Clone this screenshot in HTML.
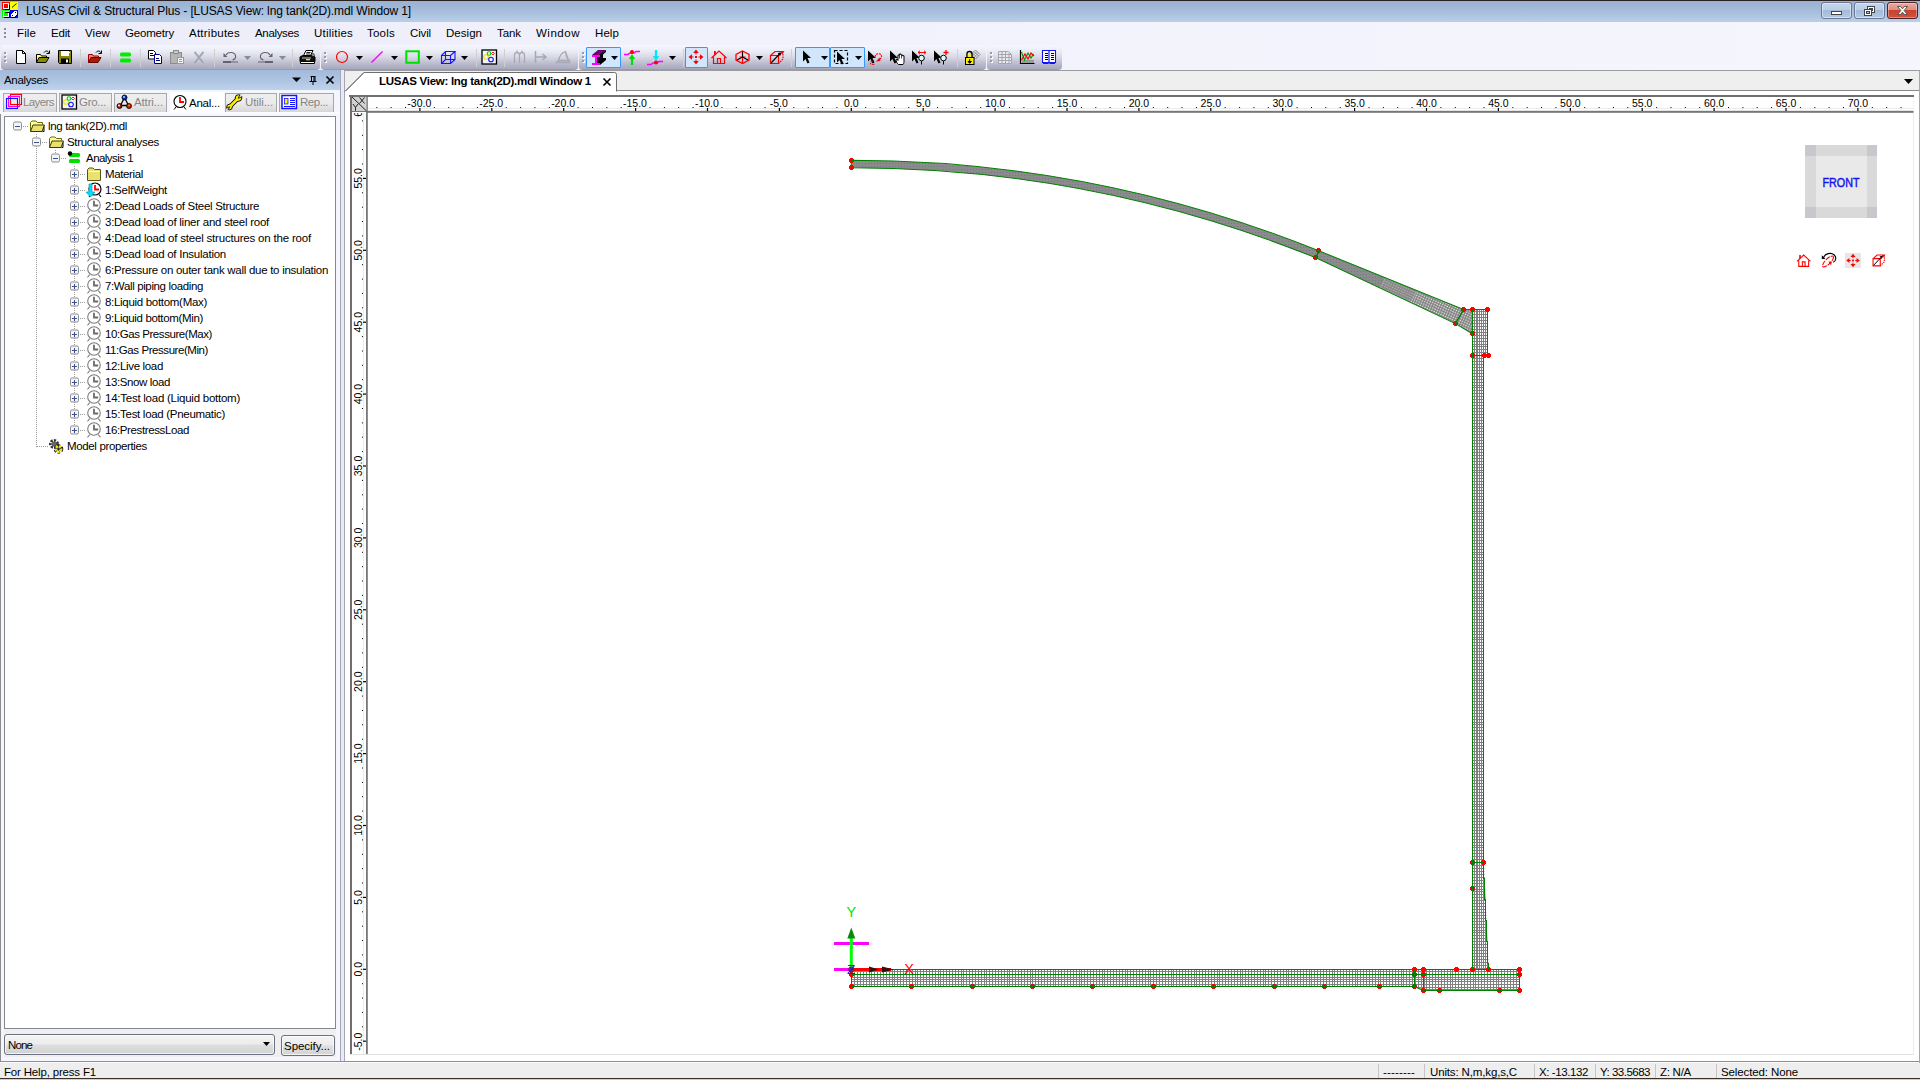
<!DOCTYPE html>
<html><head><meta charset="utf-8"><title>LUSAS Civil &amp; Structural Plus</title>
<style>
html,body{margin:0;padding:0;}
body{width:1920px;height:1080px;position:relative;overflow:hidden;background:#eeeefa;font-family:"Liberation Sans", sans-serif;font-size:11px;}
.t{position:absolute;white-space:pre;line-height:16px;height:16px;}
svg{position:absolute;overflow:visible;}
.ic{position:absolute;width:16px;height:16px;}
</style></head>
<body>
<div style="position:absolute;left:0px;top:0px;width:1920px;height:22px;background:linear-gradient(#98b0d2 0%,#a4bbda 45%,#b9cfe9 100%);"></div>
<div style="position:absolute;left:0px;top:0px;width:1920px;height:1px;background:#2a2020;"></div>
<svg style="left:2px;top:2px" width="16" height="16" viewBox="0 0 16 16" shape-rendering="crispEdges">
<rect x="0" y="0" width="8" height="8" fill="#f00"/><rect x="8" y="0" width="8" height="8" fill="#ff0"/>
<rect x="0" y="8" width="8" height="8" fill="#0f0"/><rect x="8" y="8" width="8" height="8" fill="#00f"/>
<rect x="1.5" y="1.5" width="5" height="5" fill="#f00" stroke="#fff" stroke-width="1"/><path d="M3 7.5h4.5v-4.5" stroke="#000" fill="none"/>
<rect x="1.5" y="9.5" width="5" height="5" fill="#0f0" stroke="#fff" stroke-width="1"/><path d="M2 15.5h5.5v-5.5M2.5 10.5h4" stroke="#000" fill="none"/>
<path d="M10 5.5L14.5 1.5" stroke="#224" stroke-width="1" shape-rendering="auto"/>
<path d="M9 12l4-3h2v3l-3 3h-3z" fill="#fff"/><path d="M10.5 13.5l1 1M13 10l1 1" stroke="#000"/><path d="M9 15.5h4l2.5-3" stroke="#000" fill="none"/>
</svg>
<span id="t1" class="t" style="left:26px;top:3px;font-size:12px;color:#000;font-weight:normal;letter-spacing:-0.135px;">LUSAS Civil &amp; Structural Plus - [LUSAS View: lng tank(2D).mdl Window 1]</span>
<div style="position:absolute;left:1821px;top:2px;width:31px;height:17px;border-radius:3px;border:1px solid #6c7796;box-sizing:border-box;background:linear-gradient(#c4d6ec 0%,#bacee6 45%,#a3bad8 50%,#b4c9e3 100%);box-shadow:inset 0 0 0 1px rgba(255,255,255,.45);"></div>
<div style="position:absolute;left:1854px;top:2px;width:31px;height:17px;border-radius:3px;border:1px solid #6c7796;box-sizing:border-box;background:linear-gradient(#c4d6ec 0%,#bacee6 45%,#a3bad8 50%,#b4c9e3 100%);box-shadow:inset 0 0 0 1px rgba(255,255,255,.45);"></div>
<div style="position:absolute;left:1887px;top:2px;width:31px;height:17px;border-radius:3px;border:1px solid #4a2428;box-sizing:border-box;background:linear-gradient(#e9a99f 0%,#df8d80 45%,#c9422f 50%,#d2523a 100%);box-shadow:inset 0 0 0 1px rgba(255,255,255,.35);"></div>
<svg style="left:1821px;top:2px" width="97" height="17" viewBox="0 0 97 17">
<rect x="10.5" y="9.5" width="10" height="3" fill="#fff" stroke="#444" stroke-width="1"/>
<rect x="46.500" y="4.5" width="7" height="6" fill="#fff" stroke="#444"/><rect x="48.5" y="6.5" width="3" height="2" fill="#b8cce6" stroke="#444"/>
<rect x="43.500" y="7.5" width="7" height="6" fill="#fff" stroke="#444"/><rect x="45.5" y="9.500" width="3" height="2" fill="#a9c0de" stroke="#444"/>
<path d="M76.500 4.500h3l2 2.300 2-2.300h3l-3.400 4 3.400 4h-3l-2-2.300-2 2.300h-3l3.400-4z" fill="#fff" stroke="#555" stroke-width="1"/>
</svg>
<div style="position:absolute;left:0px;top:22px;width:1920px;height:48px;background:linear-gradient(90deg,#ecedf9 0%,#f0f1fb 35%,#f5f6fd 100%);"></div>
<div style="position:absolute;left:4px;top:28px;width:2px;height:2px;background:#8c8c96;"></div>
<div style="position:absolute;left:4px;top:32px;width:2px;height:2px;background:#8c8c96;"></div>
<div style="position:absolute;left:4px;top:36px;width:2px;height:2px;background:#8c8c96;"></div>
<span id="t2" class="t" style="left:17px;top:25px;font-size:11.5px;color:#000;font-weight:normal;letter-spacing:0.117px;">File</span>
<span id="t3" class="t" style="left:51px;top:25px;font-size:11.5px;color:#000;font-weight:normal;letter-spacing:-0.207px;">Edit</span>
<span id="t4" class="t" style="left:85px;top:25px;font-size:11.5px;color:#000;font-weight:normal;letter-spacing:0.070px;">View</span>
<span id="t5" class="t" style="left:125px;top:25px;font-size:11.5px;color:#000;font-weight:normal;letter-spacing:-0.188px;">Geometry</span>
<span id="t6" class="t" style="left:189px;top:25px;font-size:11.5px;color:#000;font-weight:normal;letter-spacing:0.242px;">Attributes</span>
<span id="t7" class="t" style="left:255px;top:25px;font-size:11.5px;color:#000;font-weight:normal;letter-spacing:-0.334px;">Analyses</span>
<span id="t8" class="t" style="left:314px;top:25px;font-size:11.5px;color:#000;font-weight:normal;letter-spacing:0.215px;">Utilities</span>
<span id="t9" class="t" style="left:367px;top:25px;font-size:11.5px;color:#000;font-weight:normal;letter-spacing:0.228px;">Tools</span>
<span id="t10" class="t" style="left:410px;top:25px;font-size:11.5px;color:#000;font-weight:normal;letter-spacing:-0.147px;">Civil</span>
<span id="t11" class="t" style="left:446px;top:25px;font-size:11.5px;color:#000;font-weight:normal;letter-spacing:0.031px;">Design</span>
<span id="t12" class="t" style="left:497px;top:25px;font-size:11.5px;color:#000;font-weight:normal;letter-spacing:-0.074px;">Tank</span>
<span id="t13" class="t" style="left:536px;top:25px;font-size:11.5px;color:#000;font-weight:normal;letter-spacing:0.516px;">Window</span>
<span id="t14" class="t" style="left:595px;top:25px;font-size:11.5px;color:#000;font-weight:normal;letter-spacing:0.086px;">Help</span>
<div style="position:absolute;left:1px;top:45px;width:319px;height:24px;border-radius:3px 3px 4px 4px;background:linear-gradient(#f6f7fd 0%,#eceef7 22%,#dbdbe7 48%,#c5c5d6 68%,#b2b2c6 88%,#a9a9be 100%);border-bottom:1px solid #9a9aae;"></div>
<div style="position:absolute;left:4px;top:52px;width:2px;height:2px;background:#9a9aa6;"></div>
<div style="position:absolute;left:5px;top:53px;width:2px;height:2px;background:#fff;"></div>
<div style="position:absolute;left:4px;top:52px;width:2px;height:2px;background:#9a9aa6;"></div>
<div style="position:absolute;left:4px;top:56px;width:2px;height:2px;background:#9a9aa6;"></div>
<div style="position:absolute;left:5px;top:57px;width:2px;height:2px;background:#fff;"></div>
<div style="position:absolute;left:4px;top:56px;width:2px;height:2px;background:#9a9aa6;"></div>
<div style="position:absolute;left:4px;top:60px;width:2px;height:2px;background:#9a9aa6;"></div>
<div style="position:absolute;left:5px;top:61px;width:2px;height:2px;background:#fff;"></div>
<div style="position:absolute;left:4px;top:60px;width:2px;height:2px;background:#9a9aa6;"></div>
<div style="position:absolute;left:321px;top:45px;width:257px;height:24px;border-radius:3px 3px 4px 4px;background:linear-gradient(#f6f7fd 0%,#eceef7 22%,#dbdbe7 48%,#c5c5d6 68%,#b2b2c6 88%,#a9a9be 100%);border-bottom:1px solid #9a9aae;"></div>
<div style="position:absolute;left:324px;top:52px;width:2px;height:2px;background:#9a9aa6;"></div>
<div style="position:absolute;left:325px;top:53px;width:2px;height:2px;background:#fff;"></div>
<div style="position:absolute;left:324px;top:52px;width:2px;height:2px;background:#9a9aa6;"></div>
<div style="position:absolute;left:324px;top:56px;width:2px;height:2px;background:#9a9aa6;"></div>
<div style="position:absolute;left:325px;top:57px;width:2px;height:2px;background:#fff;"></div>
<div style="position:absolute;left:324px;top:56px;width:2px;height:2px;background:#9a9aa6;"></div>
<div style="position:absolute;left:324px;top:60px;width:2px;height:2px;background:#9a9aa6;"></div>
<div style="position:absolute;left:325px;top:61px;width:2px;height:2px;background:#fff;"></div>
<div style="position:absolute;left:324px;top:60px;width:2px;height:2px;background:#9a9aa6;"></div>
<div style="position:absolute;left:579px;top:45px;width:407px;height:24px;border-radius:3px 3px 4px 4px;background:linear-gradient(#f6f7fd 0%,#eceef7 22%,#dbdbe7 48%,#c5c5d6 68%,#b2b2c6 88%,#a9a9be 100%);border-bottom:1px solid #9a9aae;"></div>
<div style="position:absolute;left:582px;top:52px;width:2px;height:2px;background:#9a9aa6;"></div>
<div style="position:absolute;left:583px;top:53px;width:2px;height:2px;background:#fff;"></div>
<div style="position:absolute;left:582px;top:52px;width:2px;height:2px;background:#9a9aa6;"></div>
<div style="position:absolute;left:582px;top:56px;width:2px;height:2px;background:#9a9aa6;"></div>
<div style="position:absolute;left:583px;top:57px;width:2px;height:2px;background:#fff;"></div>
<div style="position:absolute;left:582px;top:56px;width:2px;height:2px;background:#9a9aa6;"></div>
<div style="position:absolute;left:582px;top:60px;width:2px;height:2px;background:#9a9aa6;"></div>
<div style="position:absolute;left:583px;top:61px;width:2px;height:2px;background:#fff;"></div>
<div style="position:absolute;left:582px;top:60px;width:2px;height:2px;background:#9a9aa6;"></div>
<div style="position:absolute;left:987px;top:45px;width:75px;height:24px;border-radius:3px 3px 4px 4px;background:linear-gradient(#f6f7fd 0%,#eceef7 22%,#dbdbe7 48%,#c5c5d6 68%,#b2b2c6 88%,#a9a9be 100%);border-bottom:1px solid #9a9aae;"></div>
<div style="position:absolute;left:990px;top:52px;width:2px;height:2px;background:#9a9aa6;"></div>
<div style="position:absolute;left:991px;top:53px;width:2px;height:2px;background:#fff;"></div>
<div style="position:absolute;left:990px;top:52px;width:2px;height:2px;background:#9a9aa6;"></div>
<div style="position:absolute;left:990px;top:56px;width:2px;height:2px;background:#9a9aa6;"></div>
<div style="position:absolute;left:991px;top:57px;width:2px;height:2px;background:#fff;"></div>
<div style="position:absolute;left:990px;top:56px;width:2px;height:2px;background:#9a9aa6;"></div>
<div style="position:absolute;left:990px;top:60px;width:2px;height:2px;background:#9a9aa6;"></div>
<div style="position:absolute;left:991px;top:61px;width:2px;height:2px;background:#fff;"></div>
<div style="position:absolute;left:990px;top:60px;width:2px;height:2px;background:#9a9aa6;"></div>
<div style="position:absolute;left:80px;top:49px;width:1px;height:18px;background:#cfcfd2;"></div>
<div style="position:absolute;left:110px;top:49px;width:1px;height:18px;background:#cfcfd2;"></div>
<div style="position:absolute;left:140px;top:49px;width:1px;height:18px;background:#cfcfd2;"></div>
<div style="position:absolute;left:214px;top:49px;width:1px;height:18px;background:#cfcfd2;"></div>
<div style="position:absolute;left:292px;top:49px;width:1px;height:18px;background:#cfcfd2;"></div>
<div style="position:absolute;left:476px;top:49px;width:1px;height:18px;background:#cfcfd2;"></div>
<div style="position:absolute;left:504px;top:49px;width:1px;height:18px;background:#cfcfd2;"></div>
<div style="position:absolute;left:683px;top:49px;width:1px;height:18px;background:#cfcfd2;"></div>
<div style="position:absolute;left:791px;top:49px;width:1px;height:18px;background:#cfcfd2;"></div>
<div style="position:absolute;left:957px;top:49px;width:1px;height:18px;background:#cfcfd2;"></div>
<div style="position:absolute;left:586px;top:47px;width:35px;height:21px;box-sizing:border-box;border:1px solid #3399ff;background:#d1e6fb;border-radius:1px;"></div>
<div style="position:absolute;left:685px;top:47px;width:23px;height:21px;box-sizing:border-box;border:1px solid #3399ff;background:#d1e6fb;border-radius:1px;"></div>
<div style="position:absolute;left:795px;top:47px;width:35px;height:21px;box-sizing:border-box;border:1px solid #3399ff;background:#d1e6fb;border-radius:1px;"></div>
<div style="position:absolute;left:830px;top:47px;width:35px;height:21px;box-sizing:border-box;border:1px solid #3399ff;background:#d1e6fb;border-radius:1px;"></div>
<svg style="left:243.5px;top:56px" width="7" height="4" viewBox="0 0 7 4"><path d="M0 0h7l-3.500 4z" fill="#8a8a94"/></svg>
<svg style="left:278.5px;top:56px" width="7" height="4" viewBox="0 0 7 4"><path d="M0 0h7l-3.500 4z" fill="#8a8a94"/></svg>
<svg style="left:355.5px;top:56px" width="7" height="4" viewBox="0 0 7 4"><path d="M0 0h7l-3.500 4z" fill="#000"/></svg>
<svg style="left:390.5px;top:56px" width="7" height="4" viewBox="0 0 7 4"><path d="M0 0h7l-3.500 4z" fill="#000"/></svg>
<svg style="left:425.5px;top:56px" width="7" height="4" viewBox="0 0 7 4"><path d="M0 0h7l-3.500 4z" fill="#000"/></svg>
<svg style="left:460.5px;top:56px" width="7" height="4" viewBox="0 0 7 4"><path d="M0 0h7l-3.500 4z" fill="#000"/></svg>
<svg style="left:610.5px;top:56px" width="7" height="4" viewBox="0 0 7 4"><path d="M0 0h7l-3.500 4z" fill="#000"/></svg>
<svg style="left:668.5px;top:56px" width="7" height="4" viewBox="0 0 7 4"><path d="M0 0h7l-3.500 4z" fill="#000"/></svg>
<svg style="left:755.5px;top:56px" width="7" height="4" viewBox="0 0 7 4"><path d="M0 0h7l-3.500 4z" fill="#000"/></svg>
<svg style="left:820.5px;top:56px" width="7" height="4" viewBox="0 0 7 4"><path d="M0 0h7l-3.500 4z" fill="#000"/></svg>
<svg style="left:854.5px;top:56px" width="7" height="4" viewBox="0 0 7 4"><path d="M0 0h7l-3.500 4z" fill="#000"/></svg>
<div style="position:absolute;left:0px;top:70px;width:1920px;height:1010px;background:#eceef8;"></div>
<div style="position:absolute;left:0px;top:69.5px;width:1920px;height:1px;background:#a4a6b4;"></div>
<div style="position:absolute;left:0px;top:70px;width:340px;height:19.5px;background:linear-gradient(#a2badb 0%,#adc4e1 50%,#bdd3ec 100%);"></div>
<div style="position:absolute;left:0px;top:89.5px;width:340px;height:971.5px;background:#f5f6fd;"></div>
<div style="position:absolute;left:4px;top:116px;width:332px;height:941px;background:#efefef;"></div>
<div style="position:absolute;left:0px;top:113.5px;width:0.8px;height:947.5px;background:#8c8c8c;"></div>
<div style="position:absolute;left:339.5px;top:70px;width:5.5px;height:991px;background:#e6eafa;border-left:1px solid #a4a6b2;border-right:1px solid #a4a6b2;box-sizing:border-box;"></div>
<span id="t15" class="t" style="left:4px;top:72px;font-size:11.5px;color:#000;font-weight:normal;letter-spacing:-0.334px;">Analyses</span>
<svg style="left:290px;top:74px" width="48" height="12" viewBox="0 0 48 12">
<path d="M2 3.500h9l-4.500 4.500z" fill="#000"/>
<path d="M20.500 2.500h5M21.500 2.500v4.500M24 2.500v4.500M25 2.500v4.500M19.500 7.500h7M23 7.500v3.500" stroke="#000" stroke-width="1" fill="none"/>
<path d="M36.500 2.500l7 7M43.500 2.500l-7 7" stroke="#000" stroke-width="1.700" fill="none"/>
</svg>
<div style="position:absolute;left:2.5px;top:92.5px;width:54.5px;height:19.5px;box-sizing:border-box;border:1px solid #a8a8a8;border-bottom:none;background:linear-gradient(#eeeeee 0%,#ebebeb 50%,#d6d6d6 100%);"></div>
<span id="t16" class="t" style="left:23px;top:94px;font-size:11.5px;color:#858585;font-weight:normal;letter-spacing:-0.589px;">Layers</span>
<div style="position:absolute;left:58.5px;top:92.5px;width:53.5px;height:19.5px;box-sizing:border-box;border:1px solid #a8a8a8;border-bottom:none;background:linear-gradient(#eeeeee 0%,#ebebeb 50%,#d6d6d6 100%);"></div>
<span id="t17" class="t" style="left:79px;top:94px;font-size:11.5px;color:#858585;font-weight:normal;letter-spacing:-0.294px;">Gro...</span>
<div style="position:absolute;left:113.5px;top:92.5px;width:53.5px;height:19.5px;box-sizing:border-box;border:1px solid #a8a8a8;border-bottom:none;background:linear-gradient(#eeeeee 0%,#ebebeb 50%,#d6d6d6 100%);"></div>
<span id="t18" class="t" style="left:134px;top:94px;font-size:11.5px;color:#858585;font-weight:normal;letter-spacing:-0.129px;">Attri...</span>
<div style="position:absolute;left:170px;top:92px;width:53.5px;height:21px;background:#fff;"></div>
<span id="t19" class="t" style="left:189px;top:95px;font-size:11.5px;color:#000;font-weight:normal;letter-spacing:-0.230px;">Anal...</span>
<div style="position:absolute;left:224.5px;top:92.5px;width:52.5px;height:19.5px;box-sizing:border-box;border:1px solid #a8a8a8;border-bottom:none;background:linear-gradient(#eeeeee 0%,#ebebeb 50%,#d6d6d6 100%);"></div>
<span id="t20" class="t" style="left:245px;top:94px;font-size:11.5px;color:#858585;font-weight:normal;letter-spacing:-0.094px;">Utili...</span>
<div style="position:absolute;left:278.5px;top:92.5px;width:55px;height:19.5px;box-sizing:border-box;border:1px solid #a8a8a8;border-bottom:none;background:linear-gradient(#eeeeee 0%,#ebebeb 50%,#d6d6d6 100%);"></div>
<span id="t21" class="t" style="left:300px;top:94px;font-size:11.5px;color:#858585;font-weight:normal;letter-spacing:-0.448px;">Rep...</span>
<div style="position:absolute;left:0px;top:112px;width:340px;height:1.5px;background:#fbfbff;"></div>
<div style="position:absolute;left:4px;top:115.5px;width:332px;height:913.5px;box-sizing:border-box;border:1px solid #828790;background:#fff;"></div>
<div style="position:absolute;left:4px;top:1034px;width:271px;height:21px;box-sizing:border-box;border:1px solid #6a7080;border-radius:3px;background:linear-gradient(#f4f4f4 0%,#ececec 48%,#dedede 52%,#d2d2d2 100%);box-shadow:inset 0 0 0 1px rgba(255,255,255,.7);"></div>
<span id="t22" class="t" style="left:8px;top:1036.5px;font-size:11.5px;color:#000;font-weight:normal;letter-spacing:-0.875px;">None</span>
<svg style="left:263px;top:1042px" width="7" height="4" viewBox="0 0 7 4"><path d="M0 0h7l-3.500 4z" fill="#000"/></svg>
<div style="position:absolute;left:281px;top:1035px;width:54px;height:21px;box-sizing:border-box;border:1px solid #6a7080;border-radius:3px;background:linear-gradient(#f4f4f4 0%,#ececec 48%,#dedede 52%,#d4d4d4 100%);box-shadow:inset 0 0 0 1px rgba(255,255,255,.7);"></div>
<span id="t23" class="t" style="left:284px;top:1037.5px;font-size:11.5px;color:#000;font-weight:normal;letter-spacing:-0.045px;">Specify...</span>
<div style="position:absolute;left:0px;top:1063px;width:1920px;height:15px;background:#eeeeee;"></div>
<div style="position:absolute;left:0px;top:1060.5px;width:1920px;height:1.2px;background:#8f8f8f;"></div>
<div style="position:absolute;left:0px;top:1061.7px;width:1920px;height:1.3px;background:#fbfbfb;"></div>
<div style="position:absolute;left:0px;top:1078px;width:1920px;height:1px;background:#3a3026;"></div>
<div style="position:absolute;left:0px;top:1079px;width:1920px;height:1px;background:#b9d4f0;"></div>
<span id="t24" class="t" style="left:4px;top:1064px;font-size:11.5px;color:#000;font-weight:normal;letter-spacing:-0.180px;">For Help, press F1</span>
<div style="position:absolute;left:1378px;top:1064px;width:1px;height:14px;background:#c6c6c6;"></div>
<div style="position:absolute;left:1424px;top:1064px;width:1px;height:14px;background:#c6c6c6;"></div>
<div style="position:absolute;left:1534px;top:1064px;width:1px;height:14px;background:#c6c6c6;"></div>
<div style="position:absolute;left:1595px;top:1064px;width:1px;height:14px;background:#c6c6c6;"></div>
<div style="position:absolute;left:1655px;top:1064px;width:1px;height:14px;background:#c6c6c6;"></div>
<div style="position:absolute;left:1716px;top:1064px;width:1px;height:14px;background:#c6c6c6;"></div>
<span id="t25" class="t" style="left:1383px;top:1064px;font-size:11.5px;color:#000;font-weight:normal;letter-spacing:0.170px;">--------</span>
<span id="t26" class="t" style="left:1430px;top:1064px;font-size:11.5px;color:#000;font-weight:normal;letter-spacing:-0.145px;">Units: N,m,kg,s,C</span>
<span id="t27" class="t" style="left:1539px;top:1064px;font-size:11.5px;color:#000;font-weight:normal;letter-spacing:-0.408px;">X: -13.132</span>
<span id="t28" class="t" style="left:1600px;top:1064px;font-size:11.5px;color:#000;font-weight:normal;letter-spacing:-0.500px;">Y: 33.5683</span>
<span id="t29" class="t" style="left:1660px;top:1064px;font-size:11.5px;color:#000;font-weight:normal;letter-spacing:-0.266px;">Z: N/A</span>
<span id="t30" class="t" style="left:1721px;top:1064px;font-size:11.5px;color:#000;font-weight:normal;letter-spacing:-0.117px;">Selected: None</span>
<div style="position:absolute;left:345px;top:70px;width:1575px;height:990.5px;background:#fff;"></div>
<div style="position:absolute;left:345px;top:70.5px;width:1575px;height:20px;background:#efefef;"></div>
<div style="position:absolute;left:345px;top:70px;width:1575px;height:1.2px;background:#9b9ba2;"></div>
<div style="position:absolute;left:345px;top:90px;width:1575px;height:1px;background:#8a8a8a;"></div>
<svg style="left:345px;top:70px" width="280" height="24" viewBox="0 0 280 24">
<path d="M0 21.500L19 2.500H269.500Q271.500 2.500 271.500 4.500V21.500" fill="#fff" stroke="#6e6e6e" stroke-width="1"/>
<rect x="0" y="20.600" width="271" height="3" fill="#fff"/>
<path d="M0 21.500L19 2.500" stroke="#6e6e6e" fill="none"/>
<path d="M258.500 8.500l7 7M265.500 8.500l-7 7" stroke="#000" stroke-width="1.600"/>
</svg>
<span id="t31" class="t" style="left:379px;top:73px;font-size:11.5px;color:#000;font-weight:bold;letter-spacing:-0.272px;">LUSAS View: lng tank(2D).mdl Window 1</span>
<svg style="left:1904px;top:79px" width="9" height="5" viewBox="0 0 9 5"><path d="M0 0h9l-4.500 5z" fill="#000"/></svg>
<div style="position:absolute;left:349px;top:94.5px;width:1564.5px;height:2px;background:#6f6f6f;"></div>
<div style="position:absolute;left:349.5px;top:94.5px;width:2px;height:959.5px;background:#6f6f6f;"></div>
<div style="position:absolute;left:1919px;top:71px;width:1px;height:992px;background:#a8a8a8;"></div>
<div style="position:absolute;left:349px;top:1054px;width:1565px;height:1px;background:#e2e2e2;"></div>
<div style="position:absolute;left:1913px;top:97px;width:1px;height:958px;background:#ececec;"></div>
<svg style="left:0;top:0" width="345" height="1030" viewBox="0 0 345 1030">
<path d="M36.5 134L36.5 446.5" stroke="#9a9a9a" stroke-width="1" stroke-dasharray="1 1" fill="none" shape-rendering="crispEdges"/>
<path d="M55.5 150L55.5 158" stroke="#9a9a9a" stroke-width="1" stroke-dasharray="1 1" fill="none" shape-rendering="crispEdges"/>
<path d="M74.5 166L74.5 430" stroke="#9a9a9a" stroke-width="1" stroke-dasharray="1 1" fill="none" shape-rendering="crispEdges"/>
<path d="M23 126.5L29 126.5" stroke="#9a9a9a" stroke-width="1" stroke-dasharray="1 1" fill="none" shape-rendering="crispEdges"/>
<rect x="13.5" y="122" width="8" height="8" rx="1.500" fill="#f4f4f4" stroke="#8f8f8f"/>
<path d="M15 126.5h5" stroke="#3c4f8e" stroke-width="1" shape-rendering="crispEdges"/>
<g transform="translate(29 118)"><path d="M1.500 13.500V4.500l1.500-1.500h4l1.500 1.500h5v2" fill="#ffff9a" stroke="#6b6b00" stroke-width="1"/><path d="M1.500 13.500l2.500-6.500h11.500l-2.500 6.500z" fill="#e8e070" stroke="#3a3a00" stroke-width="1"/><path d="M13.500 13.500h1.500v-5" stroke="#000" fill="none"/></g>
<path d="M42 142.5L48 142.5" stroke="#9a9a9a" stroke-width="1" stroke-dasharray="1 1" fill="none" shape-rendering="crispEdges"/>
<rect x="32.5" y="138" width="8" height="8" rx="1.500" fill="#f4f4f4" stroke="#8f8f8f"/>
<path d="M34 142.5h5" stroke="#3c4f8e" stroke-width="1" shape-rendering="crispEdges"/>
<g transform="translate(48 134)"><path d="M1.500 13.500V4.500l1.500-1.500h4l1.500 1.500h5v2" fill="#ffff9a" stroke="#6b6b00" stroke-width="1"/><path d="M1.500 13.500l2.500-6.500h11.500l-2.500 6.500z" fill="#e8e070" stroke="#3a3a00" stroke-width="1"/><path d="M13.500 13.500h1.500v-5" stroke="#000" fill="none"/></g>
<path d="M61 158.5L67 158.5" stroke="#9a9a9a" stroke-width="1" stroke-dasharray="1 1" fill="none" shape-rendering="crispEdges"/>
<rect x="51.5" y="154" width="8" height="8" rx="1.500" fill="#f4f4f4" stroke="#8f8f8f"/>
<path d="M53 158.5h5" stroke="#3c4f8e" stroke-width="1" shape-rendering="crispEdges"/>
<g transform="translate(67 150)"><rect x="2" y="3" width="11" height="4" rx="1.500" fill="#00e000"/><rect x="2" y="9" width="11" height="4" rx="1.500" fill="#00e000"/><circle cx="3" cy="3.500" r="2.200" fill="#000"/></g>
<path d="M80 174.5L86 174.5" stroke="#9a9a9a" stroke-width="1" stroke-dasharray="1 1" fill="none" shape-rendering="crispEdges"/>
<rect x="70.5" y="170" width="8" height="8" rx="1.500" fill="#f4f4f4" stroke="#8f8f8f"/>
<path d="M72 174.5h5" stroke="#3c4f8e" stroke-width="1" shape-rendering="crispEdges"/>
<path d="M74.5 172v5" stroke="#3c4f8e" stroke-width="1" shape-rendering="crispEdges"/>
<g transform="translate(86 166)"><path d="M1.500 14.500V3.500l1.500-1.500h4l1.500 1.500h6v11z" fill="#e9e26e" stroke="#55551a" stroke-width="1"/><path d="M2.500 5.500h11" stroke="#fffff0"/></g>
<path d="M80 190.5L86 190.5" stroke="#9a9a9a" stroke-width="1" stroke-dasharray="1 1" fill="none" shape-rendering="crispEdges"/>
<rect x="70.5" y="186" width="8" height="8" rx="1.500" fill="#f4f4f4" stroke="#8f8f8f"/>
<path d="M72 190.5h5" stroke="#3c4f8e" stroke-width="1" shape-rendering="crispEdges"/>
<path d="M74.5 188v5" stroke="#3c4f8e" stroke-width="1" shape-rendering="crispEdges"/>
<g transform="translate(86 182)"><circle cx="9" cy="7" r="6" fill="#fff" stroke="#000" stroke-width="1.200"/><path d="M9 3v4.500h4" stroke="#f00" stroke-width="1.800" fill="none"/><path d="M5 12.500l-2 2.500M13 12.500l2 2.500" stroke="#000" stroke-width="1.200"/><path d="M3 2v8h-3l4.500 5 4.500-5h-3v-8z" fill="#00e0ff" stroke="#008aa0" stroke-width=".6"/></g>
<path d="M80 206.5L86 206.5" stroke="#9a9a9a" stroke-width="1" stroke-dasharray="1 1" fill="none" shape-rendering="crispEdges"/>
<rect x="70.5" y="202" width="8" height="8" rx="1.500" fill="#f4f4f4" stroke="#8f8f8f"/>
<path d="M72 206.5h5" stroke="#3c4f8e" stroke-width="1" shape-rendering="crispEdges"/>
<path d="M74.5 204v5" stroke="#3c4f8e" stroke-width="1" shape-rendering="crispEdges"/>
<g transform="translate(86 198)"><circle cx="8" cy="7" r="6.300" fill="#fff" stroke="#7c7c7c" stroke-width="1.100"/><path d="M8 2.800v4.700h4.200" stroke="#6c6c6c" stroke-width="1.800" fill="none"/><path d="M3.800 12.500l-2.300 2.800M12.200 12.500l2.300 2.800" stroke="#7c7c7c" stroke-width="1.100"/></g>
<path d="M80 222.5L86 222.5" stroke="#9a9a9a" stroke-width="1" stroke-dasharray="1 1" fill="none" shape-rendering="crispEdges"/>
<rect x="70.5" y="218" width="8" height="8" rx="1.500" fill="#f4f4f4" stroke="#8f8f8f"/>
<path d="M72 222.5h5" stroke="#3c4f8e" stroke-width="1" shape-rendering="crispEdges"/>
<path d="M74.5 220v5" stroke="#3c4f8e" stroke-width="1" shape-rendering="crispEdges"/>
<g transform="translate(86 214)"><circle cx="8" cy="7" r="6.300" fill="#fff" stroke="#7c7c7c" stroke-width="1.100"/><path d="M8 2.800v4.700h4.200" stroke="#6c6c6c" stroke-width="1.800" fill="none"/><path d="M3.800 12.500l-2.300 2.800M12.200 12.500l2.300 2.800" stroke="#7c7c7c" stroke-width="1.100"/></g>
<path d="M80 238.5L86 238.5" stroke="#9a9a9a" stroke-width="1" stroke-dasharray="1 1" fill="none" shape-rendering="crispEdges"/>
<rect x="70.5" y="234" width="8" height="8" rx="1.500" fill="#f4f4f4" stroke="#8f8f8f"/>
<path d="M72 238.5h5" stroke="#3c4f8e" stroke-width="1" shape-rendering="crispEdges"/>
<path d="M74.5 236v5" stroke="#3c4f8e" stroke-width="1" shape-rendering="crispEdges"/>
<g transform="translate(86 230)"><circle cx="8" cy="7" r="6.300" fill="#fff" stroke="#7c7c7c" stroke-width="1.100"/><path d="M8 2.800v4.700h4.200" stroke="#6c6c6c" stroke-width="1.800" fill="none"/><path d="M3.800 12.500l-2.300 2.800M12.200 12.500l2.300 2.800" stroke="#7c7c7c" stroke-width="1.100"/></g>
<path d="M80 254.5L86 254.5" stroke="#9a9a9a" stroke-width="1" stroke-dasharray="1 1" fill="none" shape-rendering="crispEdges"/>
<rect x="70.5" y="250" width="8" height="8" rx="1.500" fill="#f4f4f4" stroke="#8f8f8f"/>
<path d="M72 254.5h5" stroke="#3c4f8e" stroke-width="1" shape-rendering="crispEdges"/>
<path d="M74.5 252v5" stroke="#3c4f8e" stroke-width="1" shape-rendering="crispEdges"/>
<g transform="translate(86 246)"><circle cx="8" cy="7" r="6.300" fill="#fff" stroke="#7c7c7c" stroke-width="1.100"/><path d="M8 2.800v4.700h4.200" stroke="#6c6c6c" stroke-width="1.800" fill="none"/><path d="M3.800 12.500l-2.300 2.800M12.200 12.500l2.300 2.800" stroke="#7c7c7c" stroke-width="1.100"/></g>
<path d="M80 270.5L86 270.5" stroke="#9a9a9a" stroke-width="1" stroke-dasharray="1 1" fill="none" shape-rendering="crispEdges"/>
<rect x="70.5" y="266" width="8" height="8" rx="1.500" fill="#f4f4f4" stroke="#8f8f8f"/>
<path d="M72 270.5h5" stroke="#3c4f8e" stroke-width="1" shape-rendering="crispEdges"/>
<path d="M74.5 268v5" stroke="#3c4f8e" stroke-width="1" shape-rendering="crispEdges"/>
<g transform="translate(86 262)"><circle cx="8" cy="7" r="6.300" fill="#fff" stroke="#7c7c7c" stroke-width="1.100"/><path d="M8 2.800v4.700h4.200" stroke="#6c6c6c" stroke-width="1.800" fill="none"/><path d="M3.800 12.500l-2.300 2.800M12.200 12.500l2.300 2.800" stroke="#7c7c7c" stroke-width="1.100"/></g>
<path d="M80 286.5L86 286.5" stroke="#9a9a9a" stroke-width="1" stroke-dasharray="1 1" fill="none" shape-rendering="crispEdges"/>
<rect x="70.5" y="282" width="8" height="8" rx="1.500" fill="#f4f4f4" stroke="#8f8f8f"/>
<path d="M72 286.5h5" stroke="#3c4f8e" stroke-width="1" shape-rendering="crispEdges"/>
<path d="M74.5 284v5" stroke="#3c4f8e" stroke-width="1" shape-rendering="crispEdges"/>
<g transform="translate(86 278)"><circle cx="8" cy="7" r="6.300" fill="#fff" stroke="#7c7c7c" stroke-width="1.100"/><path d="M8 2.800v4.700h4.200" stroke="#6c6c6c" stroke-width="1.800" fill="none"/><path d="M3.800 12.500l-2.300 2.800M12.200 12.500l2.300 2.800" stroke="#7c7c7c" stroke-width="1.100"/></g>
<path d="M80 302.5L86 302.5" stroke="#9a9a9a" stroke-width="1" stroke-dasharray="1 1" fill="none" shape-rendering="crispEdges"/>
<rect x="70.5" y="298" width="8" height="8" rx="1.500" fill="#f4f4f4" stroke="#8f8f8f"/>
<path d="M72 302.5h5" stroke="#3c4f8e" stroke-width="1" shape-rendering="crispEdges"/>
<path d="M74.5 300v5" stroke="#3c4f8e" stroke-width="1" shape-rendering="crispEdges"/>
<g transform="translate(86 294)"><circle cx="8" cy="7" r="6.300" fill="#fff" stroke="#7c7c7c" stroke-width="1.100"/><path d="M8 2.800v4.700h4.200" stroke="#6c6c6c" stroke-width="1.800" fill="none"/><path d="M3.800 12.500l-2.300 2.800M12.200 12.500l2.300 2.800" stroke="#7c7c7c" stroke-width="1.100"/></g>
<path d="M80 318.5L86 318.5" stroke="#9a9a9a" stroke-width="1" stroke-dasharray="1 1" fill="none" shape-rendering="crispEdges"/>
<rect x="70.5" y="314" width="8" height="8" rx="1.500" fill="#f4f4f4" stroke="#8f8f8f"/>
<path d="M72 318.5h5" stroke="#3c4f8e" stroke-width="1" shape-rendering="crispEdges"/>
<path d="M74.5 316v5" stroke="#3c4f8e" stroke-width="1" shape-rendering="crispEdges"/>
<g transform="translate(86 310)"><circle cx="8" cy="7" r="6.300" fill="#fff" stroke="#7c7c7c" stroke-width="1.100"/><path d="M8 2.800v4.700h4.200" stroke="#6c6c6c" stroke-width="1.800" fill="none"/><path d="M3.800 12.500l-2.300 2.800M12.200 12.500l2.300 2.800" stroke="#7c7c7c" stroke-width="1.100"/></g>
<path d="M80 334.5L86 334.5" stroke="#9a9a9a" stroke-width="1" stroke-dasharray="1 1" fill="none" shape-rendering="crispEdges"/>
<rect x="70.5" y="330" width="8" height="8" rx="1.500" fill="#f4f4f4" stroke="#8f8f8f"/>
<path d="M72 334.5h5" stroke="#3c4f8e" stroke-width="1" shape-rendering="crispEdges"/>
<path d="M74.5 332v5" stroke="#3c4f8e" stroke-width="1" shape-rendering="crispEdges"/>
<g transform="translate(86 326)"><circle cx="8" cy="7" r="6.300" fill="#fff" stroke="#7c7c7c" stroke-width="1.100"/><path d="M8 2.800v4.700h4.200" stroke="#6c6c6c" stroke-width="1.800" fill="none"/><path d="M3.800 12.500l-2.300 2.800M12.200 12.500l2.300 2.800" stroke="#7c7c7c" stroke-width="1.100"/></g>
<path d="M80 350.5L86 350.5" stroke="#9a9a9a" stroke-width="1" stroke-dasharray="1 1" fill="none" shape-rendering="crispEdges"/>
<rect x="70.5" y="346" width="8" height="8" rx="1.500" fill="#f4f4f4" stroke="#8f8f8f"/>
<path d="M72 350.5h5" stroke="#3c4f8e" stroke-width="1" shape-rendering="crispEdges"/>
<path d="M74.5 348v5" stroke="#3c4f8e" stroke-width="1" shape-rendering="crispEdges"/>
<g transform="translate(86 342)"><circle cx="8" cy="7" r="6.300" fill="#fff" stroke="#7c7c7c" stroke-width="1.100"/><path d="M8 2.800v4.700h4.200" stroke="#6c6c6c" stroke-width="1.800" fill="none"/><path d="M3.800 12.500l-2.300 2.800M12.200 12.500l2.300 2.800" stroke="#7c7c7c" stroke-width="1.100"/></g>
<path d="M80 366.5L86 366.5" stroke="#9a9a9a" stroke-width="1" stroke-dasharray="1 1" fill="none" shape-rendering="crispEdges"/>
<rect x="70.5" y="362" width="8" height="8" rx="1.500" fill="#f4f4f4" stroke="#8f8f8f"/>
<path d="M72 366.5h5" stroke="#3c4f8e" stroke-width="1" shape-rendering="crispEdges"/>
<path d="M74.5 364v5" stroke="#3c4f8e" stroke-width="1" shape-rendering="crispEdges"/>
<g transform="translate(86 358)"><circle cx="8" cy="7" r="6.300" fill="#fff" stroke="#7c7c7c" stroke-width="1.100"/><path d="M8 2.800v4.700h4.200" stroke="#6c6c6c" stroke-width="1.800" fill="none"/><path d="M3.800 12.500l-2.300 2.800M12.200 12.500l2.300 2.800" stroke="#7c7c7c" stroke-width="1.100"/></g>
<path d="M80 382.5L86 382.5" stroke="#9a9a9a" stroke-width="1" stroke-dasharray="1 1" fill="none" shape-rendering="crispEdges"/>
<rect x="70.5" y="378" width="8" height="8" rx="1.500" fill="#f4f4f4" stroke="#8f8f8f"/>
<path d="M72 382.5h5" stroke="#3c4f8e" stroke-width="1" shape-rendering="crispEdges"/>
<path d="M74.5 380v5" stroke="#3c4f8e" stroke-width="1" shape-rendering="crispEdges"/>
<g transform="translate(86 374)"><circle cx="8" cy="7" r="6.300" fill="#fff" stroke="#7c7c7c" stroke-width="1.100"/><path d="M8 2.800v4.700h4.200" stroke="#6c6c6c" stroke-width="1.800" fill="none"/><path d="M3.800 12.500l-2.300 2.800M12.200 12.500l2.300 2.800" stroke="#7c7c7c" stroke-width="1.100"/></g>
<path d="M80 398.5L86 398.5" stroke="#9a9a9a" stroke-width="1" stroke-dasharray="1 1" fill="none" shape-rendering="crispEdges"/>
<rect x="70.5" y="394" width="8" height="8" rx="1.500" fill="#f4f4f4" stroke="#8f8f8f"/>
<path d="M72 398.5h5" stroke="#3c4f8e" stroke-width="1" shape-rendering="crispEdges"/>
<path d="M74.5 396v5" stroke="#3c4f8e" stroke-width="1" shape-rendering="crispEdges"/>
<g transform="translate(86 390)"><circle cx="8" cy="7" r="6.300" fill="#fff" stroke="#7c7c7c" stroke-width="1.100"/><path d="M8 2.800v4.700h4.200" stroke="#6c6c6c" stroke-width="1.800" fill="none"/><path d="M3.800 12.500l-2.300 2.800M12.200 12.500l2.300 2.800" stroke="#7c7c7c" stroke-width="1.100"/></g>
<path d="M80 414.5L86 414.5" stroke="#9a9a9a" stroke-width="1" stroke-dasharray="1 1" fill="none" shape-rendering="crispEdges"/>
<rect x="70.5" y="410" width="8" height="8" rx="1.500" fill="#f4f4f4" stroke="#8f8f8f"/>
<path d="M72 414.5h5" stroke="#3c4f8e" stroke-width="1" shape-rendering="crispEdges"/>
<path d="M74.5 412v5" stroke="#3c4f8e" stroke-width="1" shape-rendering="crispEdges"/>
<g transform="translate(86 406)"><circle cx="8" cy="7" r="6.300" fill="#fff" stroke="#7c7c7c" stroke-width="1.100"/><path d="M8 2.800v4.700h4.200" stroke="#6c6c6c" stroke-width="1.800" fill="none"/><path d="M3.800 12.500l-2.300 2.800M12.200 12.500l2.300 2.800" stroke="#7c7c7c" stroke-width="1.100"/></g>
<path d="M80 430.5L86 430.5" stroke="#9a9a9a" stroke-width="1" stroke-dasharray="1 1" fill="none" shape-rendering="crispEdges"/>
<rect x="70.5" y="426" width="8" height="8" rx="1.500" fill="#f4f4f4" stroke="#8f8f8f"/>
<path d="M72 430.5h5" stroke="#3c4f8e" stroke-width="1" shape-rendering="crispEdges"/>
<path d="M74.5 428v5" stroke="#3c4f8e" stroke-width="1" shape-rendering="crispEdges"/>
<g transform="translate(86 422)"><circle cx="8" cy="7" r="6.300" fill="#fff" stroke="#7c7c7c" stroke-width="1.100"/><path d="M8 2.800v4.700h4.200" stroke="#6c6c6c" stroke-width="1.800" fill="none"/><path d="M3.800 12.500l-2.300 2.800M12.200 12.500l2.300 2.800" stroke="#7c7c7c" stroke-width="1.100"/></g>
<path d="M37 446.5L48 446.5" stroke="#9a9a9a" stroke-width="1" stroke-dasharray="1 1" fill="none" shape-rendering="crispEdges"/>
<g transform="translate(48 438)"><circle cx="6" cy="6" r="3.500" fill="none" stroke="#333" stroke-width="3" stroke-dasharray="2 1.200"/><circle cx="6" cy="6" r="2.500" fill="#666"/><circle cx="10.500" cy="11" r="3" fill="none" stroke="#222" stroke-width="3.600" stroke-dasharray="2 1.300"/><circle cx="10.500" cy="11" r="2.800" fill="none" stroke="#ffe600" stroke-width="2.200" stroke-dasharray="2 1.300"/><circle cx="10.500" cy="11" r="1.200" fill="#222"/></g>
</svg>
<span id="t32" class="t" style="left:48px;top:118px;font-size:11.5px;color:#000;font-weight:normal;letter-spacing:-0.336px;">lng tank(2D).mdl</span>
<span id="t33" class="t" style="left:67px;top:134px;font-size:11.5px;color:#000;font-weight:normal;letter-spacing:-0.305px;">Structural analyses</span>
<span id="t34" class="t" style="left:86px;top:150px;font-size:11.5px;color:#000;font-weight:normal;letter-spacing:-0.542px;">Analysis 1</span>
<span id="t35" class="t" style="left:105px;top:166px;font-size:11.5px;color:#000;font-weight:normal;letter-spacing:-0.363px;">Material</span>
<span id="t36" class="t" style="left:105px;top:182px;font-size:11.5px;color:#000;font-weight:normal;letter-spacing:-0.250px;">1:SelfWeight</span>
<span id="t37" class="t" style="left:105px;top:198px;font-size:11.5px;color:#000;font-weight:normal;letter-spacing:-0.311px;">2:Dead Loads of Steel Structure</span>
<span id="t38" class="t" style="left:105px;top:214px;font-size:11.5px;color:#000;font-weight:normal;letter-spacing:-0.246px;">3:Dead load of liner and steel roof</span>
<span id="t39" class="t" style="left:105px;top:230px;font-size:11.5px;color:#000;font-weight:normal;letter-spacing:-0.190px;">4:Dead load of steel structures on the roof</span>
<span id="t40" class="t" style="left:105px;top:246px;font-size:11.5px;color:#000;font-weight:normal;letter-spacing:-0.249px;">5:Dead load of Insulation</span>
<span id="t41" class="t" style="left:105px;top:262px;font-size:11.5px;color:#000;font-weight:normal;letter-spacing:-0.274px;">6:Pressure on outer tank wall due to insulation</span>
<span id="t42" class="t" style="left:105px;top:278px;font-size:11.5px;color:#000;font-weight:normal;letter-spacing:-0.367px;">7:Wall piping loading</span>
<span id="t43" class="t" style="left:105px;top:294px;font-size:11.5px;color:#000;font-weight:normal;letter-spacing:-0.302px;">8:Liquid bottom(Max)</span>
<span id="t44" class="t" style="left:105px;top:310px;font-size:11.5px;color:#000;font-weight:normal;letter-spacing:-0.341px;">9:Liquid bottom(Min)</span>
<span id="t45" class="t" style="left:105px;top:326px;font-size:11.5px;color:#000;font-weight:normal;letter-spacing:-0.434px;">10:Gas Pressure(Max)</span>
<span id="t46" class="t" style="left:105px;top:342px;font-size:11.5px;color:#000;font-weight:normal;letter-spacing:-0.432px;">11:Gas Pressure(Min)</span>
<span id="t47" class="t" style="left:105px;top:358px;font-size:11.5px;color:#000;font-weight:normal;letter-spacing:-0.336px;">12:Live load</span>
<span id="t48" class="t" style="left:105px;top:374px;font-size:11.5px;color:#000;font-weight:normal;letter-spacing:-0.392px;">13:Snow load</span>
<span id="t49" class="t" style="left:105px;top:390px;font-size:11.5px;color:#000;font-weight:normal;letter-spacing:-0.247px;">14:Test load (Liquid bottom)</span>
<span id="t50" class="t" style="left:105px;top:406px;font-size:11.5px;color:#000;font-weight:normal;letter-spacing:-0.300px;">15:Test load (Pneumatic)</span>
<span id="t51" class="t" style="left:105px;top:422px;font-size:11.5px;color:#000;font-weight:normal;letter-spacing:-0.384px;">16:PrestressLoad</span>
<span id="t52" class="t" style="left:67px;top:438px;font-size:11.5px;color:#000;font-weight:normal;letter-spacing:-0.354px;">Model properties</span>
<svg style="left:0;top:0" width="1920" height="1080" viewBox="0 0 1920 1080" font-family='"Liberation Sans", sans-serif'>
<defs>
<pattern id="mslab" width="2.400" height="2.440" patternUnits="userSpaceOnUse" x="851.500" y="969.800"><rect width="2.400" height="2.440" fill="#7d7d7d"/><rect x="1" y="1" width="1.400" height="1.440" fill="#fff"/></pattern>
<pattern id="mwall" width="1.900" height="3" patternUnits="userSpaceOnUse" x="1472.600" y="310"><rect width="1.900" height="3" fill="#808080"/><rect x=".850" y=".900" width="1.050" height="2.100" fill="#fff"/></pattern>
<pattern id="mroof" width="3" height="3" patternUnits="userSpaceOnUse"><rect width="3" height="3" fill="#8b8b8b"/><rect x="1" y="1" width="1" height="1" fill="#767690"/></pattern>
<pattern id="mtaper" width="2.500" height="2.500" patternUnits="userSpaceOnUse" patternTransform="rotate(24)"><rect width="2.500" height="2.500" fill="#808080"/><rect x="1.200" y=".600" width="1.150" height="1.250" fill="#fff"/></pattern>
<pattern id="mtaper1" width="2.500" height="2.500" patternUnits="userSpaceOnUse" patternTransform="rotate(24)"><rect width="2.500" height="2.500" fill="#878787"/><rect x="1.300" y=".700" width=".800" height=".800" fill="#f4f4f4"/></pattern>
<clipPath id="vclip"><rect x="352" y="113" width="14" height="941"/></clipPath>
<clipPath id="hclip"><rect x="368" y="97" width="1545" height="14"/></clipPath>
</defs>
<rect x="352" y="97" width="1561.500" height="14" fill="#fff"/>
<rect x="368" y="108" width="1545.500" height="1" fill="#ebebeb"/>
<rect x="352" y="110.800" width="1561.500" height="2" fill="#777"/>
<rect x="352" y="112" width="14" height="942" fill="#fff"/>
<rect x="363" y="113" width="1" height="941" fill="#ebebeb"/>
<rect x="366" y="97" width="1.800" height="957" fill="#777"/>
<rect x="352" y="97" width="14.500" height="14" fill="#d2d2d2"/>
<path d="M352 97L366.500 111" stroke="#222" stroke-width="1"/>
<path d="M359.500 97.500l5 6M364.500 97.500l-5 6" stroke="#111" stroke-width=".9" fill="none"/>
<path d="M353 104l2.500 3.500 2.500-3.500M355.500 107.500v3.300" stroke="#111" stroke-width=".9" fill="none"/>
<g clip-path="url(#hclip)">
<rect x="361.9" y="107" width="1" height="1" fill="#000"/>
<rect x="376.3" y="107" width="1" height="1" fill="#000"/>
<rect x="390.6" y="107" width="1" height="1" fill="#000"/>
<rect x="405.0" y="107" width="1" height="1" fill="#000"/>
<rect x="419.3" y="108" width="1.200" height="3" fill="#000"/>
<text x="419.3" y="107" font-size="10.500" text-anchor="middle" fill="#000">-30.0</text>
<rect x="433.8" y="107" width="1" height="1" fill="#000"/>
<rect x="448.2" y="107" width="1" height="1" fill="#000"/>
<rect x="462.5" y="107" width="1" height="1" fill="#000"/>
<rect x="476.9" y="107" width="1" height="1" fill="#000"/>
<rect x="491.2" y="108" width="1.200" height="3" fill="#000"/>
<text x="491.2" y="107" font-size="10.500" text-anchor="middle" fill="#000">-25.0</text>
<rect x="505.7" y="107" width="1" height="1" fill="#000"/>
<rect x="520.1" y="107" width="1" height="1" fill="#000"/>
<rect x="534.4" y="107" width="1" height="1" fill="#000"/>
<rect x="548.8" y="107" width="1" height="1" fill="#000"/>
<rect x="563.1" y="108" width="1.200" height="3" fill="#000"/>
<text x="563.1" y="107" font-size="10.500" text-anchor="middle" fill="#000">-20.0</text>
<rect x="577.6" y="107" width="1" height="1" fill="#000"/>
<rect x="592.0" y="107" width="1" height="1" fill="#000"/>
<rect x="606.3" y="107" width="1" height="1" fill="#000"/>
<rect x="620.7" y="107" width="1" height="1" fill="#000"/>
<rect x="635.0" y="108" width="1.200" height="3" fill="#000"/>
<text x="635.0" y="107" font-size="10.500" text-anchor="middle" fill="#000">-15.0</text>
<rect x="649.5" y="107" width="1" height="1" fill="#000"/>
<rect x="663.9" y="107" width="1" height="1" fill="#000"/>
<rect x="678.2" y="107" width="1" height="1" fill="#000"/>
<rect x="692.6" y="107" width="1" height="1" fill="#000"/>
<rect x="706.9" y="108" width="1.200" height="3" fill="#000"/>
<text x="706.9" y="107" font-size="10.500" text-anchor="middle" fill="#000">-10.0</text>
<rect x="721.4" y="107" width="1" height="1" fill="#000"/>
<rect x="735.8" y="107" width="1" height="1" fill="#000"/>
<rect x="750.1" y="107" width="1" height="1" fill="#000"/>
<rect x="764.5" y="107" width="1" height="1" fill="#000"/>
<rect x="778.8" y="108" width="1.200" height="3" fill="#000"/>
<text x="778.8" y="107" font-size="10.500" text-anchor="middle" fill="#000">-5.0</text>
<rect x="793.3" y="107" width="1" height="1" fill="#000"/>
<rect x="807.7" y="107" width="1" height="1" fill="#000"/>
<rect x="822.0" y="107" width="1" height="1" fill="#000"/>
<rect x="836.4" y="107" width="1" height="1" fill="#000"/>
<rect x="850.7" y="108" width="1.200" height="3" fill="#000"/>
<text x="851.3" y="107" font-size="10.500" text-anchor="middle" fill="#000">0.0</text>
<rect x="865.2" y="107" width="1" height="1" fill="#000"/>
<rect x="879.6" y="107" width="1" height="1" fill="#000"/>
<rect x="893.9" y="107" width="1" height="1" fill="#000"/>
<rect x="908.3" y="107" width="1" height="1" fill="#000"/>
<rect x="922.6" y="108" width="1.200" height="3" fill="#000"/>
<text x="923.2" y="107" font-size="10.500" text-anchor="middle" fill="#000">5.0</text>
<rect x="937.1" y="107" width="1" height="1" fill="#000"/>
<rect x="951.5" y="107" width="1" height="1" fill="#000"/>
<rect x="965.8" y="107" width="1" height="1" fill="#000"/>
<rect x="980.2" y="107" width="1" height="1" fill="#000"/>
<rect x="994.5" y="108" width="1.200" height="3" fill="#000"/>
<text x="995.1" y="107" font-size="10.500" text-anchor="middle" fill="#000">10.0</text>
<rect x="1009.0" y="107" width="1" height="1" fill="#000"/>
<rect x="1023.4" y="107" width="1" height="1" fill="#000"/>
<rect x="1037.7" y="107" width="1" height="1" fill="#000"/>
<rect x="1052.1" y="107" width="1" height="1" fill="#000"/>
<rect x="1066.4" y="108" width="1.200" height="3" fill="#000"/>
<text x="1067.0" y="107" font-size="10.500" text-anchor="middle" fill="#000">15.0</text>
<rect x="1080.9" y="107" width="1" height="1" fill="#000"/>
<rect x="1095.3" y="107" width="1" height="1" fill="#000"/>
<rect x="1109.6" y="107" width="1" height="1" fill="#000"/>
<rect x="1124.0" y="107" width="1" height="1" fill="#000"/>
<rect x="1138.3" y="108" width="1.200" height="3" fill="#000"/>
<text x="1138.9" y="107" font-size="10.500" text-anchor="middle" fill="#000">20.0</text>
<rect x="1152.8" y="107" width="1" height="1" fill="#000"/>
<rect x="1167.2" y="107" width="1" height="1" fill="#000"/>
<rect x="1181.5" y="107" width="1" height="1" fill="#000"/>
<rect x="1195.9" y="107" width="1" height="1" fill="#000"/>
<rect x="1210.2" y="108" width="1.200" height="3" fill="#000"/>
<text x="1210.8" y="107" font-size="10.500" text-anchor="middle" fill="#000">25.0</text>
<rect x="1224.7" y="107" width="1" height="1" fill="#000"/>
<rect x="1239.1" y="107" width="1" height="1" fill="#000"/>
<rect x="1253.4" y="107" width="1" height="1" fill="#000"/>
<rect x="1267.8" y="107" width="1" height="1" fill="#000"/>
<rect x="1282.1" y="108" width="1.200" height="3" fill="#000"/>
<text x="1282.7" y="107" font-size="10.500" text-anchor="middle" fill="#000">30.0</text>
<rect x="1296.6" y="107" width="1" height="1" fill="#000"/>
<rect x="1311.0" y="107" width="1" height="1" fill="#000"/>
<rect x="1325.3" y="107" width="1" height="1" fill="#000"/>
<rect x="1339.7" y="107" width="1" height="1" fill="#000"/>
<rect x="1354.0" y="108" width="1.200" height="3" fill="#000"/>
<text x="1354.6" y="107" font-size="10.500" text-anchor="middle" fill="#000">35.0</text>
<rect x="1368.5" y="107" width="1" height="1" fill="#000"/>
<rect x="1382.9" y="107" width="1" height="1" fill="#000"/>
<rect x="1397.2" y="107" width="1" height="1" fill="#000"/>
<rect x="1411.6" y="107" width="1" height="1" fill="#000"/>
<rect x="1425.9" y="108" width="1.200" height="3" fill="#000"/>
<text x="1426.5" y="107" font-size="10.500" text-anchor="middle" fill="#000">40.0</text>
<rect x="1440.4" y="107" width="1" height="1" fill="#000"/>
<rect x="1454.8" y="107" width="1" height="1" fill="#000"/>
<rect x="1469.1" y="107" width="1" height="1" fill="#000"/>
<rect x="1483.5" y="107" width="1" height="1" fill="#000"/>
<rect x="1497.8" y="108" width="1.200" height="3" fill="#000"/>
<text x="1498.4" y="107" font-size="10.500" text-anchor="middle" fill="#000">45.0</text>
<rect x="1512.3" y="107" width="1" height="1" fill="#000"/>
<rect x="1526.7" y="107" width="1" height="1" fill="#000"/>
<rect x="1541.0" y="107" width="1" height="1" fill="#000"/>
<rect x="1555.4" y="107" width="1" height="1" fill="#000"/>
<rect x="1569.7" y="108" width="1.200" height="3" fill="#000"/>
<text x="1570.3" y="107" font-size="10.500" text-anchor="middle" fill="#000">50.0</text>
<rect x="1584.2" y="107" width="1" height="1" fill="#000"/>
<rect x="1598.6" y="107" width="1" height="1" fill="#000"/>
<rect x="1612.9" y="107" width="1" height="1" fill="#000"/>
<rect x="1627.3" y="107" width="1" height="1" fill="#000"/>
<rect x="1641.6" y="108" width="1.200" height="3" fill="#000"/>
<text x="1642.2" y="107" font-size="10.500" text-anchor="middle" fill="#000">55.0</text>
<rect x="1656.1" y="107" width="1" height="1" fill="#000"/>
<rect x="1670.5" y="107" width="1" height="1" fill="#000"/>
<rect x="1684.8" y="107" width="1" height="1" fill="#000"/>
<rect x="1699.2" y="107" width="1" height="1" fill="#000"/>
<rect x="1713.5" y="108" width="1.200" height="3" fill="#000"/>
<text x="1714.1" y="107" font-size="10.500" text-anchor="middle" fill="#000">60.0</text>
<rect x="1728.0" y="107" width="1" height="1" fill="#000"/>
<rect x="1742.4" y="107" width="1" height="1" fill="#000"/>
<rect x="1756.7" y="107" width="1" height="1" fill="#000"/>
<rect x="1771.1" y="107" width="1" height="1" fill="#000"/>
<rect x="1785.4" y="108" width="1.200" height="3" fill="#000"/>
<text x="1786.0" y="107" font-size="10.500" text-anchor="middle" fill="#000">65.0</text>
<rect x="1799.9" y="107" width="1" height="1" fill="#000"/>
<rect x="1814.3" y="107" width="1" height="1" fill="#000"/>
<rect x="1828.6" y="107" width="1" height="1" fill="#000"/>
<rect x="1843.0" y="107" width="1" height="1" fill="#000"/>
<rect x="1857.3" y="108" width="1.200" height="3" fill="#000"/>
<text x="1857.9" y="107" font-size="10.500" text-anchor="middle" fill="#000">70.0</text>
<rect x="1871.8" y="107" width="1" height="1" fill="#000"/>
<rect x="1886.2" y="107" width="1" height="1" fill="#000"/>
<rect x="1900.5" y="107" width="1" height="1" fill="#000"/>
<rect x="1914.9" y="107" width="1" height="1" fill="#000"/>
</g>
<g clip-path="url(#vclip)">
<rect x="362" y="1055.1" width="1" height="1" fill="#000"/>
<rect x="363" y="1040.6" width="3" height="1.200" fill="#000"/>
<text transform="translate(362 1041.8) rotate(-90)" font-size="10.500" text-anchor="middle" fill="#000">-5.0</text>
<rect x="362" y="1026.3" width="1" height="1" fill="#000"/>
<rect x="362" y="1011.9" width="1" height="1" fill="#000"/>
<rect x="362" y="997.6" width="1" height="1" fill="#000"/>
<rect x="362" y="983.2" width="1" height="1" fill="#000"/>
<rect x="363" y="968.7" width="3" height="1.200" fill="#000"/>
<text transform="translate(362 969.3) rotate(-90)" font-size="10.500" text-anchor="middle" fill="#000">0.0</text>
<rect x="362" y="954.4" width="1" height="1" fill="#000"/>
<rect x="362" y="940.0" width="1" height="1" fill="#000"/>
<rect x="362" y="925.7" width="1" height="1" fill="#000"/>
<rect x="362" y="911.3" width="1" height="1" fill="#000"/>
<rect x="363" y="896.8" width="3" height="1.200" fill="#000"/>
<text transform="translate(362 897.4) rotate(-90)" font-size="10.500" text-anchor="middle" fill="#000">5.0</text>
<rect x="362" y="882.5" width="1" height="1" fill="#000"/>
<rect x="362" y="868.1" width="1" height="1" fill="#000"/>
<rect x="362" y="853.8" width="1" height="1" fill="#000"/>
<rect x="362" y="839.4" width="1" height="1" fill="#000"/>
<rect x="363" y="824.9" width="3" height="1.200" fill="#000"/>
<text transform="translate(362 825.5) rotate(-90)" font-size="10.500" text-anchor="middle" fill="#000">10.0</text>
<rect x="362" y="810.6" width="1" height="1" fill="#000"/>
<rect x="362" y="796.2" width="1" height="1" fill="#000"/>
<rect x="362" y="781.9" width="1" height="1" fill="#000"/>
<rect x="362" y="767.5" width="1" height="1" fill="#000"/>
<rect x="363" y="753.0" width="3" height="1.200" fill="#000"/>
<text transform="translate(362 753.6) rotate(-90)" font-size="10.500" text-anchor="middle" fill="#000">15.0</text>
<rect x="362" y="738.7" width="1" height="1" fill="#000"/>
<rect x="362" y="724.3" width="1" height="1" fill="#000"/>
<rect x="362" y="710.0" width="1" height="1" fill="#000"/>
<rect x="362" y="695.6" width="1" height="1" fill="#000"/>
<rect x="363" y="681.1" width="3" height="1.200" fill="#000"/>
<text transform="translate(362 681.7) rotate(-90)" font-size="10.500" text-anchor="middle" fill="#000">20.0</text>
<rect x="362" y="666.8" width="1" height="1" fill="#000"/>
<rect x="362" y="652.4" width="1" height="1" fill="#000"/>
<rect x="362" y="638.1" width="1" height="1" fill="#000"/>
<rect x="362" y="623.7" width="1" height="1" fill="#000"/>
<rect x="363" y="609.2" width="3" height="1.200" fill="#000"/>
<text transform="translate(362 609.8) rotate(-90)" font-size="10.500" text-anchor="middle" fill="#000">25.0</text>
<rect x="362" y="594.9" width="1" height="1" fill="#000"/>
<rect x="362" y="580.5" width="1" height="1" fill="#000"/>
<rect x="362" y="566.2" width="1" height="1" fill="#000"/>
<rect x="362" y="551.8" width="1" height="1" fill="#000"/>
<rect x="363" y="537.3" width="3" height="1.200" fill="#000"/>
<text transform="translate(362 537.9) rotate(-90)" font-size="10.500" text-anchor="middle" fill="#000">30.0</text>
<rect x="362" y="523.0" width="1" height="1" fill="#000"/>
<rect x="362" y="508.6" width="1" height="1" fill="#000"/>
<rect x="362" y="494.3" width="1" height="1" fill="#000"/>
<rect x="362" y="479.9" width="1" height="1" fill="#000"/>
<rect x="363" y="465.4" width="3" height="1.200" fill="#000"/>
<text transform="translate(362 466.0) rotate(-90)" font-size="10.500" text-anchor="middle" fill="#000">35.0</text>
<rect x="362" y="451.1" width="1" height="1" fill="#000"/>
<rect x="362" y="436.7" width="1" height="1" fill="#000"/>
<rect x="362" y="422.4" width="1" height="1" fill="#000"/>
<rect x="362" y="408.0" width="1" height="1" fill="#000"/>
<rect x="363" y="393.5" width="3" height="1.200" fill="#000"/>
<text transform="translate(362 394.1) rotate(-90)" font-size="10.500" text-anchor="middle" fill="#000">40.0</text>
<rect x="362" y="379.2" width="1" height="1" fill="#000"/>
<rect x="362" y="364.8" width="1" height="1" fill="#000"/>
<rect x="362" y="350.5" width="1" height="1" fill="#000"/>
<rect x="362" y="336.1" width="1" height="1" fill="#000"/>
<rect x="363" y="321.6" width="3" height="1.200" fill="#000"/>
<text transform="translate(362 322.2) rotate(-90)" font-size="10.500" text-anchor="middle" fill="#000">45.0</text>
<rect x="362" y="307.3" width="1" height="1" fill="#000"/>
<rect x="362" y="292.9" width="1" height="1" fill="#000"/>
<rect x="362" y="278.6" width="1" height="1" fill="#000"/>
<rect x="362" y="264.2" width="1" height="1" fill="#000"/>
<rect x="363" y="249.7" width="3" height="1.200" fill="#000"/>
<text transform="translate(362 250.3) rotate(-90)" font-size="10.500" text-anchor="middle" fill="#000">50.0</text>
<rect x="362" y="235.4" width="1" height="1" fill="#000"/>
<rect x="362" y="221.0" width="1" height="1" fill="#000"/>
<rect x="362" y="206.7" width="1" height="1" fill="#000"/>
<rect x="362" y="192.3" width="1" height="1" fill="#000"/>
<rect x="363" y="177.8" width="3" height="1.200" fill="#000"/>
<text transform="translate(362 178.4) rotate(-90)" font-size="10.500" text-anchor="middle" fill="#000">55.0</text>
<rect x="362" y="163.5" width="1" height="1" fill="#000"/>
<rect x="362" y="149.1" width="1" height="1" fill="#000"/>
<rect x="362" y="134.8" width="1" height="1" fill="#000"/>
<rect x="362" y="120.4" width="1" height="1" fill="#000"/>
<rect x="363" y="105.9" width="3" height="1.200" fill="#000"/>
<text transform="translate(362 106.5) rotate(-90)" font-size="10.500" text-anchor="middle" fill="#000">60.0</text>
</g>
<path d="M851.3 160.2A1253 1253 0 0 1 1318.8 250.8L1315.9 257.8A1245.5 1245.5 0 0 0 851.3 167.7Z" fill="url(#mroof)" stroke="none"/>
<path d="M1318.8 250.8L1385.41 277.756L1380.12 288.068L1315.9 257.8Z" fill="url(#mroof)" stroke="none"/>
<path d="M1385.41 277.756L1417.26 290.648L1410.83 302.544L1380.12 288.068Z" fill="url(#mtaper1)" stroke="none"/>
<path d="M1417.26 290.648L1463.6 309.4L1455.5 323.6L1410.83 302.544Z" fill="url(#mtaper)" stroke="none"/>
<path d="M1463.6 309.4L1472.4 309.4L1472.4 333.75L1455.5 323.6Z" fill="url(#mtaper)" stroke="none"/>
<clipPath id="cwall"><path d="M1472 309H1488V355H1484V863L1488.500 963V970H1472Z"/></clipPath>
<clipPath id="cslab"><path d="M851 969H1520V991H1423.500L1414.500 986.700H851Z"/></clipPath>
<path clip-path="url(#cwall)" d="M1474.5 309V970M1476.5 309V970M1477.5 309V970M1479.5 309V970M1481.5 309V970M1483.5 309V970M1485.5 309V970M1487.5 309V970M1472 311.5H1489M1472 314.5H1489M1472 317.5H1489M1472 320.5H1489M1472 323.5H1489M1472 326.5H1489M1472 329.5H1489M1472 332.5H1489M1472 335.5H1489M1472 338.5H1489M1472 341.5H1489M1472 344.5H1489M1472 346.5H1489M1472 349.5H1489M1472 352.5H1489M1472 355.5H1489M1472 358.5H1489M1472 361.5H1489M1472 364.5H1489M1472 367.5H1489M1472 370.5H1489M1472 373.5H1489M1472 376.5H1489M1472 379.5H1489M1472 382.5H1489M1472 385.5H1489M1472 387.5H1489M1472 390.5H1489M1472 393.5H1489M1472 396.5H1489M1472 399.5H1489M1472 402.5H1489M1472 405.5H1489M1472 408.5H1489M1472 411.5H1489M1472 414.5H1489M1472 417.5H1489M1472 420.5H1489M1472 423.5H1489M1472 426.5H1489M1472 428.5H1489M1472 431.5H1489M1472 434.5H1489M1472 437.5H1489M1472 440.5H1489M1472 443.5H1489M1472 446.5H1489M1472 449.5H1489M1472 452.5H1489M1472 455.5H1489M1472 458.5H1489M1472 461.5H1489M1472 464.5H1489M1472 467.5H1489M1472 470.5H1489M1472 472.5H1489M1472 475.5H1489M1472 478.5H1489M1472 481.5H1489M1472 484.5H1489M1472 487.5H1489M1472 490.5H1489M1472 493.5H1489M1472 496.5H1489M1472 499.5H1489M1472 502.5H1489M1472 505.5H1489M1472 508.5H1489M1472 511.5H1489M1472 513.5H1489M1472 516.5H1489M1472 519.5H1489M1472 522.5H1489M1472 525.5H1489M1472 528.5H1489M1472 531.5H1489M1472 534.5H1489M1472 537.5H1489M1472 540.5H1489M1472 543.5H1489M1472 546.5H1489M1472 549.5H1489M1472 552.5H1489M1472 554.5H1489M1472 557.5H1489M1472 560.5H1489M1472 563.5H1489M1472 566.5H1489M1472 569.5H1489M1472 572.5H1489M1472 575.5H1489M1472 578.5H1489M1472 581.5H1489M1472 584.5H1489M1472 587.5H1489M1472 590.5H1489M1472 593.5H1489M1472 596.5H1489M1472 598.5H1489M1472 601.5H1489M1472 604.5H1489M1472 607.5H1489M1472 610.5H1489M1472 613.5H1489M1472 616.5H1489M1472 619.5H1489M1472 622.5H1489M1472 625.5H1489M1472 628.5H1489M1472 631.5H1489M1472 634.5H1489M1472 637.5H1489M1472 639.5H1489M1472 642.5H1489M1472 645.5H1489M1472 648.5H1489M1472 651.5H1489M1472 654.5H1489M1472 657.5H1489M1472 660.5H1489M1472 663.5H1489M1472 666.5H1489M1472 669.5H1489M1472 672.5H1489M1472 675.5H1489M1472 678.5H1489M1472 680.5H1489M1472 683.5H1489M1472 686.5H1489M1472 689.5H1489M1472 692.5H1489M1472 695.5H1489M1472 698.5H1489M1472 701.5H1489M1472 704.5H1489M1472 707.5H1489M1472 710.5H1489M1472 713.5H1489M1472 716.5H1489M1472 719.5H1489M1472 722.5H1489M1472 724.5H1489M1472 727.5H1489M1472 730.5H1489M1472 733.5H1489M1472 736.5H1489M1472 739.5H1489M1472 742.5H1489M1472 745.5H1489M1472 748.5H1489M1472 751.5H1489M1472 754.5H1489M1472 757.5H1489M1472 760.5H1489M1472 763.5H1489M1472 765.5H1489M1472 768.5H1489M1472 771.5H1489M1472 774.5H1489M1472 777.5H1489M1472 780.5H1489M1472 783.5H1489M1472 786.5H1489M1472 789.5H1489M1472 792.5H1489M1472 795.5H1489M1472 798.5H1489M1472 801.5H1489M1472 804.5H1489M1472 806.5H1489M1472 809.5H1489M1472 812.5H1489M1472 815.5H1489M1472 818.5H1489M1472 821.5H1489M1472 824.5H1489M1472 827.5H1489M1472 830.5H1489M1472 833.5H1489M1472 836.5H1489M1472 839.5H1489M1472 842.5H1489M1472 845.5H1489M1472 847.5H1489M1472 850.5H1489M1472 853.5H1489M1472 856.5H1489M1472 859.5H1489M1472 862.5H1489M1472 865.5H1489M1472 868.5H1489M1472 871.5H1489M1472 874.5H1489M1472 877.5H1489M1472 880.5H1489M1472 883.5H1489M1472 886.5H1489M1472 889.5H1489M1472 891.5H1489M1472 894.5H1489M1472 897.5H1489M1472 900.5H1489M1472 903.5H1489M1472 906.5H1489M1472 909.5H1489M1472 912.5H1489M1472 915.5H1489M1472 918.5H1489M1472 921.5H1489M1472 924.5H1489M1472 927.5H1489M1472 930.5H1489M1472 932.5H1489M1472 935.5H1489M1472 938.5H1489M1472 941.5H1489M1472 944.5H1489M1472 947.5H1489M1472 950.5H1489M1472 953.5H1489M1472 956.5H1489M1472 959.5H1489M1472 962.5H1489M1472 965.5H1489M1472 968.5H1489" stroke="#808080" stroke-width="1" fill="none" shape-rendering="crispEdges"/>
<path clip-path="url(#cslab)" d="M854.5 969V992M857.5 969V992M860.5 969V992M863.5 969V992M866.5 969V992M869.5 969V992M871.5 969V992M874.5 969V992M877.5 969V992M880.5 969V992M883.5 969V992M886.5 969V992M889.5 969V992M892.5 969V992M894.5 969V992M897.5 969V992M900.5 969V992M903.5 969V992M906.5 969V992M909.5 969V992M912.5 969V992M915.5 969V992M917.5 969V992M920.5 969V992M923.5 969V992M926.5 969V992M929.5 969V992M932.5 969V992M935.5 969V992M938.5 969V992M940.5 969V992M943.5 969V992M946.5 969V992M949.5 969V992M952.5 969V992M955.5 969V992M958.5 969V992M961.5 969V992M963.5 969V992M966.5 969V992M969.5 969V992M972.5 969V992M975.5 969V992M978.5 969V992M981.5 969V992M984.5 969V992M986.5 969V992M989.5 969V992M992.5 969V992M995.5 969V992M998.5 969V992M1001.5 969V992M1004.5 969V992M1007.5 969V992M1009.5 969V992M1012.5 969V992M1015.5 969V992M1018.5 969V992M1021.5 969V992M1024.5 969V992M1027.5 969V992M1030.5 969V992M1032.5 969V992M1035.5 969V992M1038.5 969V992M1041.5 969V992M1044.5 969V992M1047.5 969V992M1050.5 969V992M1053.5 969V992M1055.5 969V992M1058.5 969V992M1061.5 969V992M1064.5 969V992M1067.5 969V992M1070.5 969V992M1073.5 969V992M1076.5 969V992M1079.5 969V992M1081.5 969V992M1084.5 969V992M1087.5 969V992M1090.5 969V992M1093.5 969V992M1096.5 969V992M1099.5 969V992M1102.5 969V992M1104.5 969V992M1107.5 969V992M1110.5 969V992M1113.5 969V992M1116.5 969V992M1119.5 969V992M1122.5 969V992M1125.5 969V992M1127.5 969V992M1130.5 969V992M1133.5 969V992M1136.5 969V992M1139.5 969V992M1142.5 969V992M1145.5 969V992M1148.5 969V992M1150.5 969V992M1153.5 969V992M1156.5 969V992M1159.5 969V992M1162.5 969V992M1165.5 969V992M1168.5 969V992M1171.5 969V992M1173.5 969V992M1176.5 969V992M1179.5 969V992M1182.5 969V992M1185.5 969V992M1188.5 969V992M1191.5 969V992M1194.5 969V992M1196.5 969V992M1199.5 969V992M1202.5 969V992M1205.5 969V992M1208.5 969V992M1211.5 969V992M1214.5 969V992M1217.5 969V992M1219.5 969V992M1222.5 969V992M1225.5 969V992M1228.5 969V992M1231.5 969V992M1234.5 969V992M1237.5 969V992M1240.5 969V992M1242.5 969V992M1245.5 969V992M1248.5 969V992M1251.5 969V992M1254.5 969V992M1257.5 969V992M1260.5 969V992M1263.5 969V992M1265.5 969V992M1268.5 969V992M1271.5 969V992M1274.5 969V992M1277.5 969V992M1280.5 969V992M1283.5 969V992M1286.5 969V992M1288.5 969V992M1291.5 969V992M1294.5 969V992M1297.5 969V992M1300.5 969V992M1303.5 969V992M1306.5 969V992M1309.5 969V992M1311.5 969V992M1314.5 969V992M1317.5 969V992M1320.5 969V992M1323.5 969V992M1326.5 969V992M1329.5 969V992M1332.5 969V992M1334.5 969V992M1337.5 969V992M1340.5 969V992M1343.5 969V992M1346.5 969V992M1349.5 969V992M1352.5 969V992M1355.5 969V992M1357.5 969V992M1360.5 969V992M1363.5 969V992M1366.5 969V992M1369.5 969V992M1372.5 969V992M1375.5 969V992M1378.5 969V992M1380.5 969V992M1383.5 969V992M1386.5 969V992M1389.5 969V992M1392.5 969V992M1395.5 969V992M1398.5 969V992M1401.5 969V992M1403.5 969V992M1406.5 969V992M1409.5 969V992M1412.5 969V992M1415.5 969V992M1418.5 969V992M1421.5 969V992M1424.5 969V992M1426.5 969V992M1429.5 969V992M1432.5 969V992M1435.5 969V992M1438.5 969V992M1441.5 969V992M1444.5 969V992M1447.5 969V992M1450.5 969V992M1452.5 969V992M1455.5 969V992M1458.5 969V992M1461.5 969V992M1464.5 969V992M1467.5 969V992M1470.5 969V992M1473.5 969V992M1475.5 969V992M1478.5 969V992M1481.5 969V992M1484.5 969V992M1487.5 969V992M1490.5 969V992M1493.5 969V992M1496.5 969V992M1498.5 969V992M1501.5 969V992M1504.5 969V992M1507.5 969V992M1510.5 969V992M1513.5 969V992M1516.5 969V992M851 971.5H1520M851 977.5H1520M851 979.5H1520M851 981.5H1520M851 984.5H1520M851 987.5H1520M851 989.5H1520" stroke="#808080" stroke-width="1" fill="none" shape-rendering="crispEdges"/>
<path d="M850 158h3v1h1v3h-1v1h-3v-1h-1v-3h1zM850 165h3v1h1v3h-1v1h-3v-1h-1v-3h1zM1317 248h3v1h1v3h-1v1h-3v-1h-1v-3h1zM1314 255h3v1h1v3h-1v1h-3v-1h-1v-3h1zM1462 307h3v1h1v3h-1v1h-3v-1h-1v-3h1zM1454 321h3v1h1v3h-1v1h-3v-1h-1v-3h1zM1471 307h3v1h1v3h-1v1h-3v-1h-1v-3h1zM1471 331h3v1h1v3h-1v1h-3v-1h-1v-3h1zM1486 307h3v1h1v3h-1v1h-3v-1h-1v-3h1zM1471 353h3v1h1v3h-1v1h-3v-1h-1v-3h1zM1483 353h3v1h1v3h-1v1h-3v-1h-1v-3h1zM1487 353h3v1h1v3h-1v1h-3v-1h-1v-3h1zM1471 860h3v1h1v3h-1v1h-3v-1h-1v-3h1zM1482 860h3v1h1v3h-1v1h-3v-1h-1v-3h1zM1471 886h3v1h1v3h-1v1h-3v-1h-1v-3h1zM1413 967h3v1h1v3h-1v1h-3v-1h-1v-3h1zM1422 967h3v1h1v3h-1v1h-3v-1h-1v-3h1zM1455 967h3v1h1v3h-1v1h-3v-1h-1v-3h1zM1471 967h3v1h1v3h-1v1h-3v-1h-1v-3h1zM1487 967h3v1h1v3h-1v1h-3v-1h-1v-3h1zM1518 967h3v1h1v3h-1v1h-3v-1h-1v-3h1zM1518 972h3v1h1v3h-1v1h-3v-1h-1v-3h1zM1413 972h3v1h1v3h-1v1h-3v-1h-1v-3h1zM1422 972h3v1h1v3h-1v1h-3v-1h-1v-3h1zM850 972h3v1h1v3h-1v1h-3v-1h-1v-3h1zM1323 984h3v1h1v3h-1v1h-3v-1h-1v-3h1zM1378 984h3v1h1v3h-1v1h-3v-1h-1v-3h1zM1413 984h3v1h1v3h-1v1h-3v-1h-1v-3h1zM1422 988h3v1h1v3h-1v1h-3v-1h-1v-3h1zM1438 988h3v1h1v3h-1v1h-3v-1h-1v-3h1zM1498 988h3v1h1v3h-1v1h-3v-1h-1v-3h1zM1518 988h3v1h1v3h-1v1h-3v-1h-1v-3h1zM850 984h3v1h1v3h-1v1h-3v-1h-1v-3h1zM910 984h3v1h1v3h-1v1h-3v-1h-1v-3h1zM971 984h3v1h1v3h-1v1h-3v-1h-1v-3h1zM1031 984h3v1h1v3h-1v1h-3v-1h-1v-3h1zM1091 984h3v1h1v3h-1v1h-3v-1h-1v-3h1zM1152 984h3v1h1v3h-1v1h-3v-1h-1v-3h1zM1212 984h3v1h1v3h-1v1h-3v-1h-1v-3h1zM1273 984h3v1h1v3h-1v1h-3v-1h-1v-3h1z" fill="#f00" shape-rendering="crispEdges"/>
<path d="M851.3 160.2A1253 1253 0 0 1 1318.8 250.8L1315.9 257.8A1245.5 1245.5 0 0 0 851.3 167.7Z" fill="none" stroke="#008000" stroke-width="1.050"/>
<path d="M1318.8 250.8L1463.6 309.4L1455.5 323.6L1315.9 257.8Z" fill="none" stroke="#008000" stroke-width="1.050"/>
<path d="M1463.6 309.4L1472.4 309.4L1472.4 333.75L1455.5 323.6Z" fill="none" stroke="#008000" stroke-width="1.050"/>
<path d="M851.500 969.500H1519.500V990.500H1423.500M851.500 974.500H1519.500M851.500 986.500H1414.500M851.500 969.500V986.500M1414.500 969.500V986.500M1423.500 969.500V990.500M1472.500 309.500H1487.500V355.500H1472.500M1472.500 309.500V969.500M1483.500 355.500V862.500M1472.500 862.500H1483.500" stroke="#008000" stroke-width="1" fill="none" shape-rendering="crispEdges"/>
<path d="M1414.500 986.500L1423.500 990.500" stroke="#008000" stroke-width="1.100" fill="none"/>
<path d="M1483.500 862.500V878.500H1484.500V899.500H1485.500V920.500H1486.500V941.500H1487.500V963.500H1488.500V969.500" stroke="#008000" stroke-width="1" fill="none" shape-rendering="crispEdges"/>
<rect x="834" y="942" width="35" height="3" fill="#ff00ff"/><rect x="834" y="968" width="18" height="3" fill="#ff00ff"/>
<rect x="849.800" y="937" width="3" height="32" fill="#00ff00"/><path d="M851.300 927.500L855.300 938.500H847.300Z" fill="#0a8a0a"/>
<rect x="851" y="968" width="40" height="3" fill="#ff0000"/><circle cx="851.300" cy="969.500" r="3" fill="#5a2a5a"/>
<path d="M869 966.500L879 969.500L869 972.500Z" fill="#3a0c0c"/><path d="M882 966.500L894 969.500L882 972.500Z" fill="#3a0c0c"/>
<text x="851.300" y="916.500" font-size="14.500" text-anchor="middle" fill="#00e400">Y</text>
<text x="909" y="973.800" font-size="14.500" text-anchor="middle" fill="#f00">X</text>
<text x="851" y="973.500" font-size="13.500" text-anchor="middle" fill="#1a1aff">Z</text>
<rect x="1805" y="145" width="72" height="73" fill="#d9d9d9"/>
<rect x="1805" y="145" width="11" height="11" fill="#c6c8cc"/>
<rect x="1867" y="145" width="10" height="11" fill="#c6c8cc"/>
<rect x="1805" y="207" width="11" height="11" fill="#c6c8cc"/>
<rect x="1867" y="207" width="10" height="11" fill="#c6c8cc"/>
<rect x="1816" y="156" width="51" height="51" fill="#e9e9e9"/>
<text x="1841" y="186.500" font-size="12.500" text-anchor="middle" fill="#1414f0" stroke="#1414f0" stroke-width=".45" textLength="37" lengthAdjust="spacingAndGlyphs">FRONT</text>
<rect x="1845" y="253" width="16" height="15" fill="#e6e6e6"/>
</svg>
<svg style="left:0;top:49px" width="1100" height="16" viewBox="0 0 1100 16">
<g transform="translate(13 0)"><path d="M3.500 1.500h6l3 3v10h-9z" fill="#fff" stroke="#000"/><path d="M9.500 1.500v3h3" fill="none" stroke="#000"/></g>
<g transform="translate(35 0)"><path d="M1.500 13.500v-8h4l1 1.500h5v2" fill="#ffff80" stroke="#000"/><path d="M1.500 13.500l2.500-5h10l-3 5z" fill="#8a8a00" stroke="#000"/><path d="M9 3.500c1.500-2 4-2 5 .5M14.500 1.500v3h-3" fill="none" stroke="#000"/></g>
<g transform="translate(57 0)"><path d="M1.500 1.500h13v13h-12l-1-1z" fill="#8a8a00" stroke="#000"/><rect x="4" y="2" width="8" height="5" fill="#fff"/><rect x="4" y="9.500" width="8" height="5" fill="#000"/><rect x="9" y="10.500" width="2" height="3" fill="#fff"/><rect x="12" y="3" width="1" height="1" fill="#fff"/></g>
<g transform="translate(87 0)"><path d="M1.500 13.500v-8h4l1 1.500h5v2" fill="#ff7a7a" stroke="#a00000"/><path d="M1.500 13.500l2.500-5h10l-3 5z" fill="#a02000" stroke="#600"/><path d="M9 3.500c1.500-2 4-2 5 .5M14.500 1.500v3h-3" fill="none" stroke="#000"/></g>
<g transform="translate(117 0)"><rect x="3" y="3.500" width="11" height="4" rx="1.500" fill="#00ee00"/><rect x="3" y="9.500" width="11" height="4" rx="1.500" fill="#00ee00"/></g>
<g transform="translate(147 0)"><path d="M1.500 1.500h5l2 2v6.500h-7z" fill="#fff" stroke="#000"/><path d="M3 4.500h3M3 6.500h4" stroke="#000"/><path d="M7.500 5.500h5l2 2v7h-7z" fill="#fff" stroke="#000080"/><path d="M9 9.500h3M9 11.500h4" stroke="#000080"/></g>
<g transform="translate(169 0)"><rect x="1.500" y="3.500" width="11" height="11" fill="#b5b5b5" stroke="#8c8c8c"/><rect x="4.500" y="1.500" width="5" height="3" fill="#c8c8c8" stroke="#8c8c8c"/><rect x="8.500" y="8.500" width="6" height="6" fill="#f4f4f4" stroke="#9a9a9a"/><path d="M10 10.500h3M10 12.500h3" stroke="#9a9a9a"/></g>
<g transform="translate(191 0)"><path d="M3.500 3q1 1 4.500 5.500t4.500 5.500M12.500 3q-1 1-4.500 5.500t-4.500 5.500" stroke="#a4a6b4" stroke-width="1.900" fill="none"/></g>
<g transform="translate(222 0)"><path d="M4 6c1.500-3.500 8.500-3.500 9.500 .5c.5 2.500-1 4-3 4.500" fill="none" stroke="#62626e" stroke-width="1.100"/><path d="M1.500 4v4h4z" fill="#62626e"/><path d="M1 13h8.500" stroke="#62626e" stroke-width="2"/><path d="M10.500 13h5" stroke="#62626e" stroke-width="2" stroke-dasharray="1 1"/></g>
<g transform="translate(257 0)"><path d="M13 6c-1.500-3.500-8.500-3.500-9.500 .5c-.5 2.500 1 4 3 4.500" fill="none" stroke="#62626e" stroke-width="1.100"/><path d="M15.500 4v4h-4z" fill="#62626e"/><path d="M7.500 13h8.500" stroke="#62626e" stroke-width="2"/><path d="M1.500 13h5" stroke="#62626e" stroke-width="2" stroke-dasharray="1 1"/></g>
<g transform="translate(299 0)"><path d="M4.500 6.500l2.500-5h7l-2.500 5z" fill="#fff" stroke="#000"/><path d="M7.500 3.500h4M7 5h4" stroke="#000" stroke-width=".9"/><path d="M1 8l2.500-1.500h10l2.500 1.500v4.500h-15z" fill="#111" stroke="#000"/><path d="M2 12.500h12l1.500-1.500" fill="none" stroke="#000"/><path d="M1.500 12.500h14v2h-14z" fill="#fff" stroke="#000"/><path d="M3 9h9" stroke="#fff" stroke-width=".8"/><rect x="7" y="10" width="4" height="1.300" fill="#ffe600"/><circle cx="14" cy="6" r="1.300" fill="#fff" stroke="#000" stroke-width=".8"/></g>
<g transform="translate(334 0)"><circle cx="8" cy="8" r="5.500" fill="none" stroke="#f00" stroke-width="1.200"/></g>
<g transform="translate(369 0)"><path d="M2.500 13.500L13.500 2.500" stroke="#ff00ff" stroke-width="1.500"/></g>
<g transform="translate(404 0)"><rect x="2.300" y="2.300" width="12.500" height="11.500" fill="none" stroke="#00e000" stroke-width="2"/></g>
<g transform="translate(439 0)"><path d="M2.500 6.500h9v8h-9zM2.500 6.500l4-4h9.500l-4.500 4M16 2.500v8l-4.500 4M2.500 14.500l4-4h9.500M6.500 2.500v8" fill="none" stroke="#1414ff" stroke-width="1.100"/></g>
<g transform="translate(481 0)"><rect x="1" y="1" width="14.500" height="14" fill="#f4f4f8" stroke="#000" stroke-width="1.300"/><circle cx="5" cy="8" r="2.300" fill="none" stroke="#e8e800" stroke-width="1.100"/><circle cx="8" cy="4.500" r="1.800" fill="none" stroke="#00d000" stroke-width="1.100"/><circle cx="10" cy="10.500" r="2.300" fill="none" stroke="#1414ff" stroke-width="1.100"/><path d="M12 3l1.500 1.500-1.500 1.500-1.500-1.500z" fill="none" stroke="#f00" stroke-width=".9"/></g>
<g transform="translate(511 0)"><path d="M3.500 14v-7.500q0-3 2.500-3t2.500 3v7.500M8.500 14v-7.500q0-3 2.500-3t2.500 3v7.500M6 3v-1.500M11 3v-1.500" fill="none" stroke="#a8a8b2" stroke-width="1.300"/></g>
<g transform="translate(533 0)"><path d="M2.500 2v12M2.500 8h10M9.500 5l3.500 3-3.500 3" fill="none" stroke="#a8a8b2" stroke-width="1.500"/></g>
<g transform="translate(555 0)"><path d="M1.500 13.500h13v-2h-11zM3.500 11.500c1-5 4-8 7-9l3 9M10.500 2.500c0 3 1 6 3 9" fill="none" stroke="#a8a8b2" stroke-width="1.300"/></g>
<g transform="translate(590 0)"><path d="M2 6L8 1h8l-6 5z" fill="#5a005a"/><path d="M10 6l6-5v2l-6 5zM7 8l6-5v6l-6 5zM7 14l6-5h3l-6 5zM10 14l6-5v2l-6 5z" fill="#000"/><path d="M4 4.500l5-3.500M6 5.500l5-4M8 5.500l5-4" stroke="#ff00ff" stroke-width=".7" stroke-dasharray="1 1"/><path d="M8 9l4-3.500M8 11.500l4-3.500" stroke="#a000a0" stroke-width=".7" stroke-dasharray="1 1"/><path d="M2 6h8v2h-3v6h3v2h-8v-2h3v-6h-3z" fill="#ff00ff"/></g>
<g transform="translate(624 0)"><path d="M0 5.500h4l2-1.500h4l2-1.500h4" stroke="#ff00ff" stroke-width="1.500" fill="none"/><path d="M8 16v-8" stroke="#00e000" stroke-width="2.200"/><path d="M4.800 10l3.200-5 3.200 5z" fill="#00e000"/><circle cx="8" cy="3" r="2" fill="#f00"/></g>
<g transform="translate(647 0)"><path d="M0 15.500h4l2-1.500h4l2-1.500h4" stroke="#ff00ff" stroke-width="1.500" fill="none"/><path d="M9 1v8" stroke="#00e8f8" stroke-width="2.200"/><path d="M5.800 7l3.200 5 3.200-5z" fill="#00e8f8"/><circle cx="9" cy="13.500" r="2" fill="#f00"/></g>
<g transform="translate(688 0)"><path d="M8 2.500v11M2.500 8h11" stroke="#f00" stroke-width="1.100" stroke-dasharray="3 5 3 0" fill="none"/><path d="M8 .500l2.800 3.500h-5.600zM8 15.500l2.800-3.500h-5.600zM.500 8l3.500-2.800v5.600zM15.500 8l-3.500-2.800v5.600z" fill="#f00"/><rect x="7" y="7" width="2" height="2" fill="#f00"/></g>
<g transform="translate(711 0)"><path d="M.500 9L8 2L15.500 9M2.500 8v6.500h11v-6.500M6.500 14.500v-5h3v5" fill="none" stroke="#f00" stroke-width="1.200"/><path d="M3 2h1.800v3l-1.800 1.800z" fill="#f00"/></g>
<g transform="translate(734 0)"><path d="M8.500 2L15 5.500V11L8.500 14.500L2 11V5.500Z" fill="none" stroke="#f00" stroke-width="1.300"/><path d="M8.500 8v6M5.500 8h6" stroke="#f00" stroke-width="1.200"/><path d="M8.500 2.500V8L3 11M8.500 8L14 11" stroke="#000" stroke-width="1.200" fill="none"/></g>
<g transform="translate(768 0)"><path d="M2.500 6.500h8v8h-8zM2.500 6.500l4.500-4h8l-4.500 4" fill="none" stroke="#f00" stroke-width="1.200"/><path d="M15 2.500v7.500l-4.500 4.500" fill="none" stroke="#f00" stroke-width="1.200" stroke-dasharray="1.500 1"/><path d="M3 14L12.500 4M12.500 4l-.5 2.500M12.500 4l-2.500.500" stroke="#000" stroke-width="1.100" fill="none"/><path d="M12 2.500h3v3z" fill="#f00"/></g>
<g transform="translate(799 0)"><path d="M4 1.5v11l2.500-2.500 2 4.500 2-1-2-4.500h3.500z" fill="#000"/></g>
<g transform="translate(833 0)"><rect x="1.500" y="1.500" width="13" height="13" fill="none" stroke="#000" stroke-width="1.200" stroke-dasharray="3 2"/><path d="M4 2.5v11l2.500-2.500 2 4.500 2-1-2-4.500h3.500z" fill="#000"/></g>
<g transform="translate(867 0)"><path d="M1 1.5v11l2.500-2.500 2 4.500 2-1-2-4.500h3.500z" fill="#000"/><path d="M8 8c0-2.500 3-4 5-3c2 1 2 3.500 .5 4.500l-2 1.500" fill="none" stroke="#f00" stroke-width="1.100" stroke-dasharray="2 .8"/><path d="M9 12.500l4.500-.5-1-3.500z" fill="#f00"/><path d="M5.500 12c-2.500 1-3 3-.5 3.500c1.500 .3 2.500-.5 2.500-.5" fill="none" stroke="#f00" stroke-width="1.100" stroke-dasharray="2 .8"/></g>
<g transform="translate(889 0)"><path d="M1 1.5v11l2.500-2.500 2 4.500 2-1-2-4.500h3.500z" fill="#000"/><path d="M9.500 15.500c-1.500-1-2.500-3.500-2.500-5l1.300-.3 .7 1.300v-5.500h1.500v-1h1.500v1h1.500v.700h1.500v5.800c0 1.500-.5 2.500-1 3z" fill="#fff" stroke="#000" stroke-width="1"/><path d="M10.500 6v3.500M12.500 6v3.500" stroke="#000" stroke-width=".7"/></g>
<g transform="translate(911 0)"><path d="M1 1.5v11l2.500-2.500 2 4.500 2-1-2-4.500h3.500z" fill="#000"/><circle cx="10.500" cy="9" r="2.800" fill="#d8ffff" stroke="#000" stroke-width="1"/><path d="M10.500 12v3.500" stroke="#000"/><path d="M7 3.500h8M7 3.500l2-1.800M7 3.500l2 1.800M15 3.500l-2-1.800M15 3.500l-2 1.800" stroke="#f00" stroke-width="1" fill="none"/></g>
<g transform="translate(933 0)"><path d="M1 1.5v11l2.500-2.500 2 4.500 2-1-2-4.500h3.500z" fill="#000"/><circle cx="10.500" cy="9" r="2.800" fill="#d8ffff" stroke="#000" stroke-width="1"/><path d="M10.500 12v3.500" stroke="#000"/><path d="M10.500 3.500h5M13 1v5" stroke="#f00" stroke-width="1.300" fill="none"/></g>
<g transform="translate(962 0)"><path d="M9 5.500l4.500-4.500 4.500 4.500-4.500 4.500z" fill="#f2f2f6" stroke="#555" stroke-width=".6"/><path d="M10.500 4l4.500 4.500M12 2.500l4.500 4.500M10.500 7l4.500-4.500M12 8.500l4.500-4.500" stroke="#555" stroke-width=".6"/><path d="M5 9v-4q0-2.500 2.500-2.500t2.500 2.500v4" fill="none" stroke="#000" stroke-width="1.400"/><path d="M6.300 9v-3.500q0-1.200 1.200-1.200t1.200 1.200v3.500" fill="none" stroke="#ffee00" stroke-width=".9"/><rect x="3.500" y="8.500" width="8.500" height="7" fill="#ffee00" stroke="#000" stroke-width="1"/><path d="M7.700 10v3M6 12.500h3.400l-1.700 1.800z" stroke="#000" stroke-width="1" fill="#000"/></g>
<g transform="translate(997 0)"><path d="M1.500 2.500h10l3 3v9h-13z" fill="#e9e9ee" stroke="#a6a6b2"/><path d="M1.500 5.500h13M1.500 8.500h13M1.500 11.500h13M5 2.500v12M8.500 2.500v12M12 4v10.500" stroke="#a6a6b2" stroke-width="1" fill="none"/></g>
<g transform="translate(1019 0)"><path d="M1.500 1v14M1 14.500h14.500" stroke="#000" stroke-width="1.200" fill="none"/><rect x="3" y="11" width="12" height="3" fill="#9a9a9a"/><path d="M2.500 3l3 8 3.500-7 3 5 2.500-4" fill="none" stroke="#00a000" stroke-width="1.200"/><path d="M2.500 11l3.500-6 3 5 3-6 3 3" fill="none" stroke="#f00" stroke-width="1.200"/></g>
<g transform="translate(1041 0)"><path d="M1.500 1.500h13v12h-13z" fill="#fff" stroke="#1414f0" stroke-width="1.100"/><path d="M8 1.500v13" stroke="#1414f0" stroke-width="1.200"/><path d="M3.500 4.500h3M3.500 6.500h3M3.500 8.500h3M3.500 10.500h3M9.500 4.500h3M9.500 6.500h3M9.500 8.500h3M9.500 10.500h3" stroke="#000" stroke-width="1" shape-rendering="crispEdges"/><path d="M2 14.500h5.500M8.500 14.500h5.500" stroke="#1414f0" stroke-width="1.200"/></g>
</svg>
<svg style="left:0;top:94px" width="345" height="17" viewBox="0 0 345 17">
<g transform="translate(4 0)"><rect x="6.500" y=".500" width="11" height="10" fill="none" stroke="#f00" stroke-width="1.100"/><rect x="4.500" y="2.500" width="11" height="10" fill="none" stroke="#ff00ff" stroke-width="1.100"/><rect x="2.500" y="4.500" width="11" height="10" fill="none" stroke="#1414ff" stroke-width="1.100"/></g>
<g transform="translate(61 0)"><rect x="1" y="1" width="14.500" height="14" fill="#f4f4f8" stroke="#000" stroke-width="1.300"/><circle cx="5" cy="8" r="2.300" fill="none" stroke="#e8e800" stroke-width="1.100"/><circle cx="8" cy="4.500" r="1.800" fill="none" stroke="#00d000" stroke-width="1.100"/><circle cx="10" cy="10.500" r="2.300" fill="none" stroke="#1414ff" stroke-width="1.100"/><path d="M12 3l1.500 1.500-1.500 1.500-1.500-1.500z" fill="none" stroke="#f00" stroke-width=".9"/></g>
<g transform="translate(116 0)"><path d="M8.500 3.500l-4 8M8.500 3.500l4 8M4.500 11.500h8" stroke="#000" stroke-width="1.300"/><circle cx="8.500" cy="3.500" r="2.500" fill="#1414e0" stroke="#000" stroke-width=".8"/><circle cx="8" cy="3" r="1" fill="#6ff"/><circle cx="3.500" cy="12" r="2.500" fill="#8a2000" stroke="#000" stroke-width=".8"/><circle cx="3" cy="11.500" r="1" fill="#fff"/><circle cx="13" cy="12" r="2.500" fill="#f00" stroke="#000" stroke-width=".8"/><circle cx="13" cy="11.500" r="1" fill="#0f0"/></g>
<g transform="translate(172 0)"><circle cx="8" cy="7.500" r="6" fill="#fff" stroke="#000" stroke-width="1.100"/><path d="M8 3v5h4" stroke="#f00" stroke-width="1.800" fill="none"/><path d="M4 13l-2 2.500M12 13l2 2.500" stroke="#000" stroke-width="1"/></g>
<g transform="translate(226 0)"><path d="M4 12.500L12 4.500" stroke="#000" stroke-width="4.200"/><circle cx="12.500" cy="4" r="3.300" fill="#ffee00" stroke="#000" stroke-width=".9"/><circle cx="3.500" cy="13" r="2.800" fill="#ffee00" stroke="#000" stroke-width=".9"/><path d="M4 12.500L12 4.500" stroke="#ffee00" stroke-width="2.500"/><path d="M12.200 4.300L14 .200L16.600 2.600Z" fill="#e9e9e9" stroke="none"/><path d="M12.200 4.300L14 .500M12.200 4.300L16.300 2.600" stroke="#000" stroke-width=".8"/><path d="M3.700 12.800L2 16.500L-.300 14.200Z" fill="#dedede" stroke="none"/><path d="M3.700 12.800L2 16M3.700 12.800L.200 14.200" stroke="#000" stroke-width=".8"/></g>
<g transform="translate(281 0)"><rect x="1" y="1.500" width="14.500" height="13" fill="#fff" stroke="#1414ff" stroke-width="1.500"/><rect x="3.500" y="4.500" width="3.500" height="5.500" fill="#ffee00" stroke="#1414ff" stroke-width=".8"/><path d="M9 4.500h5M9 6.500h5M9 8.500h5M9 10.500h5M3 12.500h11" stroke="#1414ff" stroke-width="1"/></g>
</svg>
<svg style="left:0;top:0" width="1920" height="300" viewBox="0 0 1920 300">
<g transform="translate(1796.500 253.300) scale(.9)"><path d="M.500 9L8 2L15.500 9M2.500 8v6.500h11v-6.500M6.500 14.500v-5h3v5" fill="none" stroke="#f00" stroke-width="1.200"/><path d="M3 2h1.800v3l-1.800 1.800z" fill="#f00"/></g>
<g transform="translate(1845.800 253.300) scale(.9)"><path d="M8 2.500v11M2.500 8h11" stroke="#f00" stroke-width="1.100" stroke-dasharray="3 5 3 0" fill="none"/><path d="M8 .500l2.800 3.500h-5.600zM8 15.500l2.800-3.500h-5.600zM.500 8l3.500-2.800v5.600zM15.500 8l-3.500-2.800v5.600z" fill="#f00"/><rect x="7" y="7" width="2" height="2" fill="#f00"/></g>
<g transform="translate(1870.800 252.800) scale(.9)"><path d="M2.500 6.500h8v8h-8zM2.500 6.500l4.500-4h8l-4.500 4" fill="none" stroke="#f00" stroke-width="1.200"/><path d="M15 2.500v7.500l-4.500 4.500" fill="none" stroke="#f00" stroke-width="1.200" stroke-dasharray="1.500 1"/><path d="M3 14L12.500 4M12.500 4l-.5 2.500M12.500 4l-2.500.500" stroke="#000" stroke-width="1.100" fill="none"/><path d="M12 2.500h3v3z" fill="#f00"/></g>
<ellipse cx="1828" cy="261.500" rx="7.300" ry="2.600" transform="rotate(-45 1828 261.500)" fill="none" stroke="#f00" stroke-width="1.100" stroke-dasharray="5 1"/><path d="M1828.300 261.500l3.500.3-.8 3.400z" fill="#f00"/>
<path d="M1823.500 257.500c1.500-4 7.500-5.500 10.800-2.500c2.500 2.500 1.500 6-1 7.300" fill="none" stroke="#000" stroke-width="1.100"/><path d="M1821.800 255.300v3.700h3.700z" fill="#000"/>
</svg>
</body></html>
